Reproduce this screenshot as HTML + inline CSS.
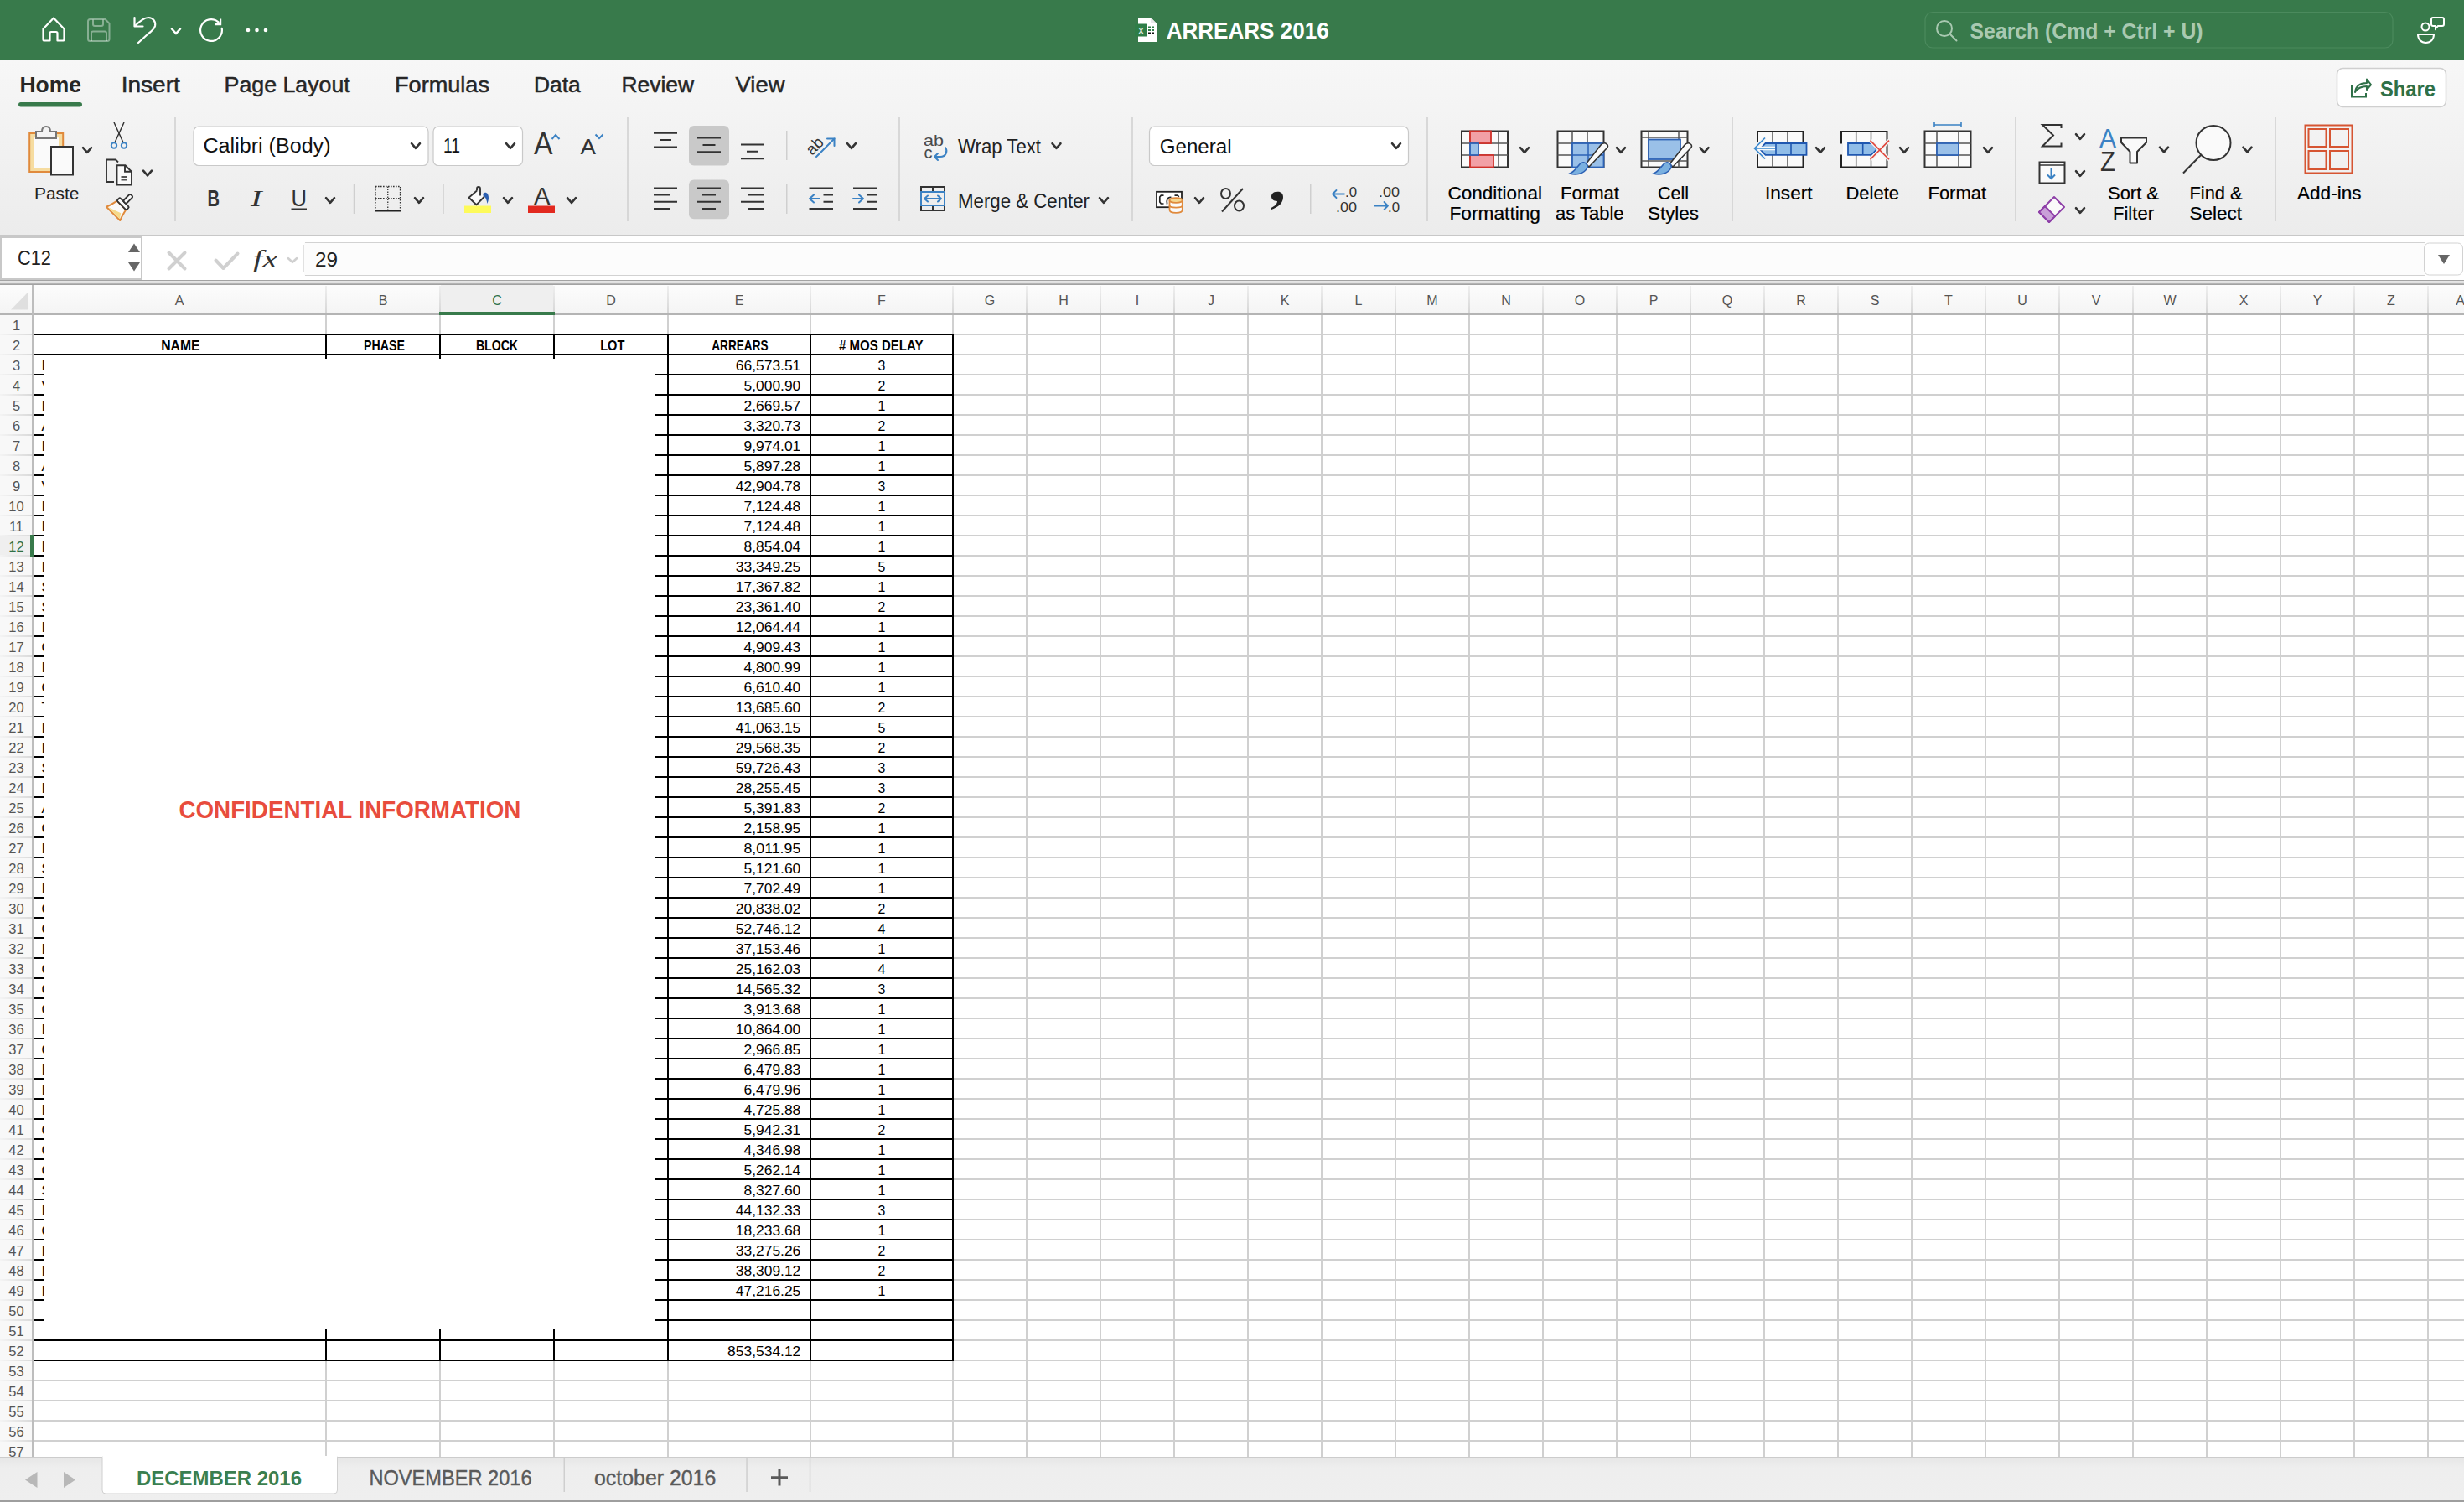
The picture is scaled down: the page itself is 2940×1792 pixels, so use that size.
<!DOCTYPE html>
<html><head><meta charset="utf-8"><title>ARREARS 2016</title>
<style>
html,body{margin:0;padding:0;width:2940px;height:1792px;overflow:hidden;background:#fff;}
svg{display:block;font-family:"Liberation Sans", sans-serif;}
</style></head><body>
<svg width="2940" height="1792" viewBox="0 0 2940 1792">
<rect x="0" y="0" width="2940" height="72" fill="#387a4b"/>
<path d="M51.5 34.5 L64 21.5 L76.5 34.5 L76.5 47 Q76.5 48.5 75 48.5 L68.5 48.5 L68.5 39.5 Q68.5 38 67 38 L61 38 Q59.5 38 59.5 39.5 L59.5 48.5 L53 48.5 Q51.5 48.5 51.5 47 Z" fill="none" stroke="#fff" stroke-width="2.2" stroke-linejoin="round"/>
<g fill="none" stroke="#fff" stroke-opacity="0.4" stroke-width="2"><path d="M107.5 23 L125.5 23 L130.5 28 L130.5 46.5 Q130.5 49 128 49 L107.5 49 Q105 49 105 46.5 L105 25.5 Q105 23 107.5 23 Z" stroke-linejoin="round"/><path d="M111 23.5 V29 Q111 31 113 31 H121 Q123 31 123 29 V23.5"/><path d="M109 49 V39.5 Q109 37.5 111 37.5 H125 Q127 37.5 127 39.5 V49"/></g>
<g fill="none" stroke="#fff" stroke-width="2.2" stroke-linecap="round" stroke-linejoin="round"><path d="M160.5 21 L160.5 31.5 L170.5 31.5"/><path d="M161 31 C168 24 173 21 177 21 C183 21 186 26 185 31 C184 35 180 38 176 41 L165 51"/></g>
<path d="M205 34.5 L210 40 L215 34.5" fill="none" stroke="#fff" stroke-width="2.6" stroke-linecap="round" stroke-linejoin="round"/>
<g fill="none" stroke="#fff" stroke-width="2.2" stroke-linecap="round" stroke-linejoin="round"><path d="M264.7 33.8 A12.9 12.9 0 1 1 260.6 26.4"/><path d="M263.1 22.5 V29.2 H256.5" stroke-linecap="butt" stroke-linejoin="miter"/></g>
<circle cx="296" cy="36" r="2.3" fill="#fff"/>
<circle cx="306.5" cy="36" r="2.3" fill="#fff"/>
<circle cx="317" cy="36" r="2.3" fill="#fff"/>
<path d="M1358 21 L1373 21 L1380 28 L1380 50 L1358 50 Z" fill="#fff"/><path d="M1373 21 L1373 28 L1380 28" fill="#e8e8e8"/>
<rect x="1354" y="28.5" width="15" height="15" rx="1.5" fill="#2e7d47"/>
<text x="1361.5" y="40.5" font-size="11" fill="#fff" font-weight="normal" text-anchor="middle" >X</text>
<g fill="#2e7d47"><rect x="1370" y="31.5" width="3" height="2"/><rect x="1374" y="31.5" width="3" height="2"/><rect x="1370" y="35" width="3" height="2"/><rect x="1374" y="35" width="3" height="2"/><rect x="1370" y="38.5" width="3" height="2" fill="#111"/><rect x="1374" y="38.5" width="3" height="2" fill="#111"/></g>
<text x="1391.7" y="46.2" font-size="26.96" fill="#fff" font-weight="bold" text-anchor="start" textLength="194" lengthAdjust="spacingAndGlyphs" >ARREARS 2016</text>
<rect x="2297" y="14.5" width="558" height="42.5" rx="9" fill="#387a4b" stroke="#4b8a5d" stroke-width="1.2"/>
<g fill="none" stroke="#a9c9b1" stroke-width="2"><circle cx="2320" cy="34" r="9"/><path d="M2327 41 L2334.5 48.5" stroke-linecap="round"/></g>
<text x="2350.6" y="46" font-size="25.98" fill="#a9c9b1" font-weight="bold" text-anchor="start" textLength="278" lengthAdjust="spacingAndGlyphs" >Search (Cmd + Ctrl + U)</text>
<g fill="none" stroke="#fff" stroke-width="2"><circle cx="2894" cy="32" r="4.5"/><path d="M2885 41 L2904 41 C2904 47 2900 51 2894.5 51 C2889 51 2885 47 2885 41 Z"/><path d="M2903 21 L2914 21 C2915.5 21 2916 21.5 2916 23 L2916 29 C2916 30.5 2915.5 31 2914 31 L2909 31 L2906 34 L2906 31 L2903 31 C2901.5 31 2901 30.5 2901 29 L2901 23 C2901 21.5 2901.5 21 2903 21 Z"/></g>
<defs><linearGradient id="rg" x1="0" y1="0" x2="0" y2="1"><stop offset="0" stop-color="#f7f7f7"/><stop offset="1" stop-color="#ececec"/></linearGradient></defs>
<rect x="0" y="72" width="2940" height="208" fill="url(#rg)"/>
<text x="23.5" y="110" font-size="26.54" fill="#262626" font-weight="bold" text-anchor="start" textLength="73.5" lengthAdjust="spacingAndGlyphs" >Home</text>
<rect x="22" y="122" width="76" height="5.5" rx="2.75" fill="#387a4b"/>
<text x="144.7" y="110" font-size="26.54" fill="#262626" font-weight="normal" text-anchor="start" textLength="70.1" lengthAdjust="spacingAndGlyphs" stroke="#262626" stroke-width="0.5">Insert</text>
<text x="267.6" y="110" font-size="26.54" fill="#262626" font-weight="normal" text-anchor="start" textLength="150.1" lengthAdjust="spacingAndGlyphs" stroke="#262626" stroke-width="0.5">Page Layout</text>
<text x="471" y="110" font-size="26.54" fill="#262626" font-weight="normal" text-anchor="start" textLength="113" lengthAdjust="spacingAndGlyphs" stroke="#262626" stroke-width="0.5">Formulas</text>
<text x="637" y="110" font-size="26.54" fill="#262626" font-weight="normal" text-anchor="start" textLength="55.7" lengthAdjust="spacingAndGlyphs" stroke="#262626" stroke-width="0.5">Data</text>
<text x="741.5" y="110" font-size="26.54" fill="#262626" font-weight="normal" text-anchor="start" textLength="86.5" lengthAdjust="spacingAndGlyphs" stroke="#262626" stroke-width="0.5">Review</text>
<text x="877.6" y="110" font-size="26.54" fill="#262626" font-weight="normal" text-anchor="start" textLength="58.8" lengthAdjust="spacingAndGlyphs" stroke="#262626" stroke-width="0.5">View</text>
<rect x="2788.5" y="81.5" width="130" height="46" rx="7" fill="#fff" stroke="#cfcfcf" stroke-width="1.5"/>
<g fill="none" stroke="#2f7048" stroke-width="2"><path d="M2806 101 L2806 115.5 L2823 115.5 L2823 111"/><path d="M2810 110 C2811 102 2816 99 2824 99 L2824 94.5 L2829 101 L2824 107 L2824 103 C2818 103 2813 105 2810 110 Z" stroke-linejoin="round"/></g>
<text x="2840" y="114.5" font-size="25.14" fill="#2f7048" font-weight="bold" text-anchor="start" textLength="66" lengthAdjust="spacingAndGlyphs" >Share</text>
<rect x="208.25" y="140" width="1.5" height="124" fill="#cfcfcf"/>
<rect x="748.25" y="140" width="1.5" height="124" fill="#cfcfcf"/>
<rect x="1072.25" y="140" width="1.5" height="124" fill="#cfcfcf"/>
<rect x="1350.25" y="140" width="1.5" height="124" fill="#cfcfcf"/>
<rect x="1702.25" y="140" width="1.5" height="124" fill="#cfcfcf"/>
<rect x="2066.25" y="140" width="1.5" height="124" fill="#cfcfcf"/>
<rect x="2404.25" y="140" width="1.5" height="124" fill="#cfcfcf"/>
<rect x="2714.25" y="140" width="1.5" height="124" fill="#cfcfcf"/>
<rect x="421.75" y="220" width="1.5" height="35" fill="#cfcfcf"/>
<rect x="528.25" y="220" width="1.5" height="35" fill="#cfcfcf"/>
<rect x="938.0" y="220" width="1.5" height="35" fill="#cfcfcf"/>
<rect x="1563.0" y="220" width="1.5" height="35" fill="#cfcfcf"/>
<rect x="938.0" y="156" width="1.5" height="35" fill="#cfcfcf"/>
<text x="41" y="238" font-size="20.25" fill="#222" font-weight="normal" text-anchor="start" textLength="53.5" lengthAdjust="spacingAndGlyphs" >Paste</text>
<rect x="35.2" y="159" width="40" height="46" fill="#f6dca0" stroke="#e08a3c" stroke-width="2"/>
<rect x="40" y="164.2" width="30" height="35.8" fill="#fafafa"/>
<path d="M43 157 L50 157 C50 153 52 151 55 151 C58 151 60 153 60 157 L67 157 L67 165 L43 165 Z" fill="#f4f4f4" stroke="#777" stroke-width="2"/>
<rect x="61" y="175" width="26" height="33.5" fill="#fafafa" stroke="#333" stroke-width="2"/>
<path d="M99 176.2 L104.0 181.8 L109 176.2" fill="none" stroke="#333" stroke-width="2.6" stroke-linecap="round" stroke-linejoin="round"/>
<g fill="none" stroke="#333" stroke-width="1.5"><path d="M136 146 L147 170"/><path d="M148 146 L137 170"/></g><g fill="none" stroke="#3b82c4" stroke-width="2"><circle cx="136" cy="173.5" r="3.2"/><circle cx="148" cy="173.5" r="3.2"/></g>
<g fill="#fafafa" stroke="#333" stroke-width="1.9"><path d="M141 193.5 L138 190.5 L127 190.5 L127 217 L136 217" fill="none"/><path d="M139.5 197.3 L149.5 197.3 L157 204.8 L157 220.5 L139.5 220.5 Z" stroke="#eeeeee" stroke-width="5"/><path d="M139.5 197.3 L149.5 197.3 L157 204.8 L157 220.5 L139.5 220.5 Z"/><path d="M149 197.3 V204.8 H157" fill="none"/></g><path d="M144.5 211 H151.5 M144.5 214.6 H151.5" stroke="#555" stroke-width="1.8"/>
<path d="M171 203.7 L176.0 209.3 L181 203.7" fill="none" stroke="#333" stroke-width="2.6" stroke-linecap="round" stroke-linejoin="round"/>
<g transform="translate(145 245) rotate(45)"><path d="M-7.5 0 Q-9 8 -11.5 14 L11.5 14 Q9 8 7.5 0 Z" fill="#fafafa" stroke="#e08a3c" stroke-width="2" stroke-linejoin="round"/><path d="M-10 13 L10 13 L6 7 Z" fill="#f5d98a"/><rect x="-8" y="-5" width="16" height="5" rx="1.5" fill="#fafafa" stroke="#333" stroke-width="1.9"/><rect x="-2.5" y="-17" width="5" height="12" rx="2" fill="#fafafa" stroke="#333" stroke-width="1.9"/></g>
<rect x="231" y="151" width="280" height="46.5" rx="6" fill="#fff" stroke="#c9c9c9" stroke-width="1.2"/>
<text x="242.5" y="182" font-size="23.74" fill="#111" font-weight="normal" text-anchor="start" textLength="152" lengthAdjust="spacingAndGlyphs" >Calibri (Body)</text>
<path d="M491 171.2 L496.0 176.8 L501 171.2" fill="none" stroke="#333" stroke-width="2.6" stroke-linecap="round" stroke-linejoin="round"/>
<rect x="517" y="151" width="106.5" height="46.5" rx="6" fill="#fff" stroke="#c9c9c9" stroke-width="1.2"/>
<text x="529" y="182" font-size="23.74" fill="#111" font-weight="normal" text-anchor="start" textLength="20" lengthAdjust="spacingAndGlyphs" >11</text>
<path d="M604 171.2 L609.0 176.8 L614 171.2" fill="none" stroke="#333" stroke-width="2.6" stroke-linecap="round" stroke-linejoin="round"/>
<text x="637" y="184" font-size="36.31" fill="#333" font-weight="normal" text-anchor="start" textLength="22.5" lengthAdjust="spacingAndGlyphs" >A</text>
<path d="M658.5 166 L663 161 L667.5 166" fill="none" stroke="#3b82c4" stroke-width="2"/>
<text x="692.5" y="184" font-size="26.54" fill="#333" font-weight="normal" text-anchor="start" textLength="18.5" lengthAdjust="spacingAndGlyphs" >A</text>
<path d="M710.5 160.5 L715 165 L719.5 160.5" fill="none" stroke="#3b82c4" stroke-width="2"/>
<text x="247.5" y="246" font-size="27.93" fill="#333" font-weight="bold" text-anchor="start" textLength="14.5" lengthAdjust="spacingAndGlyphs" >B</text>
<text x="299" y="246" font-size="27.93" fill="#333" font-weight="normal" text-anchor="start" textLength="13.5" lengthAdjust="spacingAndGlyphs" font-style="italic" font-family="Liberation Serif">I</text>
<text x="347.5" y="246" font-size="27.93" fill="#333" font-weight="normal" text-anchor="start" textLength="18.5" lengthAdjust="spacingAndGlyphs" >U</text>
<rect x="347.5" y="248.5" width="18.5" height="1.8" fill="#333"/>
<path d="M389 236.2 L394.0 241.8 L399 236.2" fill="none" stroke="#333" stroke-width="2.6" stroke-linecap="round" stroke-linejoin="round"/>
<g fill="none" stroke="#333" stroke-width="1.3" stroke-dasharray="1.6 1.4"><rect x="448" y="222.5" width="29.5" height="28.5"/><path d="M462.75 222.5 V251 M448 236.75 H477.5"/></g><rect x="447.5" y="250" width="30.5" height="2.5" fill="#222"/>
<path d="M495 236.2 L500.0 241.8 L505 236.2" fill="none" stroke="#333" stroke-width="2.6" stroke-linecap="round" stroke-linejoin="round"/>
<path d="M569 227.5 L559.5 235.7 L568.4 244.3 L578 234.5 Z" fill="#fafafa"/><path d="M569 227.5 L559.5 235.7 L568.4 244.3 L578 234.5" fill="none" stroke="#333" stroke-width="1.9"/><path d="M573 233.5 V225 A2 2 0 0 0 569 225 V227.5" fill="none" stroke="#333" stroke-width="1.9"/><path d="M576.5 231 C579 228.5 583 230 583 236 C583 239 582 241 581.5 243 C580.5 238 579.5 235 576.5 233.5 Z" fill="#2a5eb0"/>
<rect x="554" y="245.5" width="32" height="8.5" fill="#fdfa5a"/>
<path d="M601 236.2 L606.0 241.8 L611 236.2" fill="none" stroke="#333" stroke-width="2.6" stroke-linecap="round" stroke-linejoin="round"/>
<text x="637" y="244" font-size="30.03" fill="#333" font-weight="normal" text-anchor="start" textLength="19.5" lengthAdjust="spacingAndGlyphs" >A</text>
<rect x="630" y="245.5" width="32" height="8.5" fill="#e2291f"/>
<path d="M677 236.2 L682.0 241.8 L687 236.2" fill="none" stroke="#333" stroke-width="2.6" stroke-linecap="round" stroke-linejoin="round"/>
<rect x="822" y="150" width="48" height="47.5" rx="6" fill="#c9c9c9"/>
<rect x="822" y="214.5" width="48" height="46.75" rx="6" fill="#c9c9c9"/>
<rect x="780.0" y="157.75" width="28" height="2" fill="#333"/><rect x="787.0" y="166" width="14" height="2" fill="#333"/><rect x="780.0" y="174.5" width="28" height="2" fill="#333"/>
<rect x="832.0" y="163.5" width="28" height="2" fill="#333"/><rect x="838.5" y="172" width="15" height="2" fill="#333"/><rect x="832.0" y="180.25" width="28" height="2" fill="#333"/>
<rect x="884.0" y="171.5" width="28" height="2" fill="#333"/><rect x="891.0" y="179.75" width="14" height="2" fill="#333"/><rect x="884.0" y="188.25" width="28" height="2" fill="#333"/>
<rect x="780" y="223.5" width="28" height="2" fill="#333"/><rect x="780" y="231.5" width="19.5" height="2" fill="#333"/><rect x="780" y="239.75" width="28" height="2" fill="#333"/><rect x="780" y="248" width="19.5" height="2" fill="#333"/>
<rect x="832.0" y="223.5" width="28" height="2" fill="#333"/><rect x="838.0" y="231.5" width="16" height="2" fill="#333"/><rect x="832.0" y="239.75" width="28" height="2" fill="#333"/><rect x="838.0" y="248" width="16" height="2" fill="#333"/>
<rect x="884" y="223.5" width="28" height="2" fill="#333"/><rect x="892" y="231.5" width="20" height="2" fill="#333"/><rect x="884" y="239.75" width="28" height="2" fill="#333"/><rect x="892" y="248" width="20" height="2" fill="#333"/>
<text x="0" y="0" font-size="19" fill="#333" transform="translate(969 186) rotate(-45)">ab</text>
<g fill="none" stroke="#3b82c4" stroke-width="2" stroke-linecap="round"><path d="M974 187 L995.5 165.5"/><path d="M987 165.5 L995.5 165.5 L995.5 174"/></g>
<path d="M1011 171.2 L1016.0 176.8 L1021 171.2" fill="none" stroke="#333" stroke-width="2.6" stroke-linecap="round" stroke-linejoin="round"/>
<rect x="965.5" y="223.5" width="28.5" height="2" fill="#333"/><rect x="982.5" y="231.5" width="11.5" height="2" fill="#333"/><rect x="982.5" y="239.75" width="11.5" height="2" fill="#333"/><rect x="965.5" y="248" width="28.5" height="2" fill="#333"/>
<g fill="none" stroke="#3b82c4" stroke-width="2" stroke-linecap="round" stroke-linejoin="round"><path d="M966 237 L978 237 M971 232.5 L966 237 L971 241.5"/><path d="M1018 237 L1030 237 M1025 232.5 L1030 237 L1025 241.5"/></g>
<rect x="1018.0" y="223.5" width="28.5" height="2" fill="#333"/><rect x="1035.0" y="231.5" width="11.5" height="2" fill="#333"/><rect x="1035.0" y="239.75" width="11.5" height="2" fill="#333"/><rect x="1018.0" y="248" width="28.5" height="2" fill="#333"/>
<text x="1102" y="174" font-size="19" fill="#4a4a4a" font-weight="normal" text-anchor="start" textLength="24" lengthAdjust="spacingAndGlyphs" >ab</text>
<text x="1102.5" y="188.5" font-size="21" fill="#4a4a4a" font-weight="normal" text-anchor="start" textLength="10" lengthAdjust="spacingAndGlyphs" >c</text>
<g fill="none" stroke="#3b82c4" stroke-width="2" stroke-linecap="round" stroke-linejoin="round"><path d="M1128 176 C1131 180 1129 187 1122 187 L1115 187"/><path d="M1119 183 L1115 187 L1119 191"/></g>
<text x="1143" y="182.5" font-size="23.04" fill="#222" font-weight="normal" text-anchor="start" textLength="99" lengthAdjust="spacingAndGlyphs" >Wrap Text</text>
<path d="M1255.5 171.2 L1260.5 176.8 L1265.5 171.2" fill="none" stroke="#333" stroke-width="2.6" stroke-linecap="round" stroke-linejoin="round"/>
<g fill="none" stroke="#333" stroke-width="2"><rect x="1099" y="223" width="28" height="28"/><path d="M1113 223 V229 M1113 245 V251"/></g><rect x="1099" y="229" width="28" height="16" fill="none" stroke="#3b82c4" stroke-width="2"/><path d="M1103 237 L1123 237 M1107 233.5 L1103 237 L1107 240.5 M1119 233.5 L1123 237 L1119 240.5" fill="none" stroke="#3b82c4" stroke-width="2" stroke-linecap="round" stroke-linejoin="round"/>
<text x="1143" y="247.5" font-size="23.04" fill="#222" font-weight="normal" text-anchor="start" textLength="157" lengthAdjust="spacingAndGlyphs" >Merge &amp; Center</text>
<path d="M1312 236.2 L1317.0 241.8 L1322 236.2" fill="none" stroke="#333" stroke-width="2.6" stroke-linecap="round" stroke-linejoin="round"/>
<rect x="1371.5" y="151" width="309" height="46.5" rx="6" fill="#fff" stroke="#c9c9c9" stroke-width="1.2"/>
<text x="1383.75" y="182.5" font-size="24.44" fill="#111" font-weight="normal" text-anchor="start" textLength="85.75" lengthAdjust="spacingAndGlyphs" >General</text>
<path d="M1661 171.2 L1666.0 176.8 L1671 171.2" fill="none" stroke="#333" stroke-width="2.6" stroke-linecap="round" stroke-linejoin="round"/>
<rect x="1380" y="228.8" width="30" height="18.4" fill="#fff" stroke="#222" stroke-width="1.8"/><path d="M1388.5 233.2 H1385.3 L1383.8 235 V241 L1385.3 243 H1388.5 M1397.5 235.5 C1393 234.5 1391.5 239 1392.6 243.5 M1401.5 233.2 H1405 L1406.8 234.8" fill="none" stroke="#222" stroke-width="1.7"/>
<path d="M1395.5 239 V250.5 C1395.5 255 1410.8 255 1410.8 250.5 V239 Z" fill="#fafafa" stroke="#e08a3c" stroke-width="1.8"/><path d="M1395.5 245 C1395.5 248.5 1410.8 248.5 1410.8 245" fill="none" stroke="#e08a3c" stroke-width="1.8"/><ellipse cx="1403.15" cy="239" rx="7.65" ry="2.9" fill="#f5d890" stroke="#e08a3c" stroke-width="1.8"/>
<path d="M1426 236.2 L1431.0 241.8 L1436 236.2" fill="none" stroke="#333" stroke-width="2.6" stroke-linecap="round" stroke-linejoin="round"/>
<g fill="none" stroke="#333" stroke-width="2"><ellipse cx="1462.5" cy="231" rx="5.5" ry="6"/><ellipse cx="1478.5" cy="245.5" rx="5.5" ry="6"/><path d="M1483 225 L1458 252.5"/></g>
<path d="M1523 229 C1527 228 1531 230 1531 235 C1531 242 1526 247 1517 250 L1516.5 248 C1521 246 1524 243 1524 240 C1519 240 1517 237 1517 234.5 C1517 231 1519.5 229 1523 229 Z" fill="#222"/>
<text x="1605" y="235" font-size="17" fill="#333" font-weight="normal" text-anchor="start" textLength="14" lengthAdjust="spacingAndGlyphs" >.0</text>
<text x="1594" y="252.5" font-size="17" fill="#333" font-weight="normal" text-anchor="start" textLength="25" lengthAdjust="spacingAndGlyphs" >.00</text>
<path d="M1590 231.5 L1604 231.5 M1594.5 227 L1590 231.5 L1594.5 236" fill="none" stroke="#3b82c4" stroke-width="1.8" stroke-linecap="round" stroke-linejoin="round"/>
<text x="1645" y="235" font-size="17" fill="#333" font-weight="normal" text-anchor="start" textLength="25" lengthAdjust="spacingAndGlyphs" >.00</text>
<text x="1656" y="252.5" font-size="17" fill="#333" font-weight="normal" text-anchor="start" textLength="14" lengthAdjust="spacingAndGlyphs" >.0</text>
<path d="M1640.5 245.5 L1656 245.5 M1651.5 241 L1656 245.5 L1651.5 250" fill="none" stroke="#3b82c4" stroke-width="1.8" stroke-linecap="round" stroke-linejoin="round"/>
<text x="1727.5" y="238" font-size="21.65" fill="#000" font-weight="normal" text-anchor="start" textLength="112.5" lengthAdjust="spacingAndGlyphs" stroke="#000" stroke-width="0.2">Conditional</text>
<text x="1729.5" y="262" font-size="21.65" fill="#000" font-weight="normal" text-anchor="start" textLength="108.5" lengthAdjust="spacingAndGlyphs" stroke="#000" stroke-width="0.2">Formatting</text>
<text x="1862" y="238" font-size="21.65" fill="#000" font-weight="normal" text-anchor="start" textLength="70" lengthAdjust="spacingAndGlyphs" stroke="#000" stroke-width="0.2">Format</text>
<text x="1856" y="262" font-size="21.65" fill="#000" font-weight="normal" text-anchor="start" textLength="81.5" lengthAdjust="spacingAndGlyphs" stroke="#000" stroke-width="0.2">as Table</text>
<text x="1978" y="238" font-size="21.65" fill="#000" font-weight="normal" text-anchor="start" textLength="37" lengthAdjust="spacingAndGlyphs" stroke="#000" stroke-width="0.2">Cell</text>
<text x="1966" y="262" font-size="21.65" fill="#000" font-weight="normal" text-anchor="start" textLength="61" lengthAdjust="spacingAndGlyphs" stroke="#000" stroke-width="0.2">Styles</text>
<text x="2106" y="238" font-size="21.65" fill="#000" font-weight="normal" text-anchor="start" textLength="56.5" lengthAdjust="spacingAndGlyphs" stroke="#000" stroke-width="0.2">Insert</text>
<text x="2202.5" y="238" font-size="21.65" fill="#000" font-weight="normal" text-anchor="start" textLength="63.5" lengthAdjust="spacingAndGlyphs" stroke="#000" stroke-width="0.2">Delete</text>
<text x="2300.5" y="238" font-size="21.65" fill="#000" font-weight="normal" text-anchor="start" textLength="69.5" lengthAdjust="spacingAndGlyphs" stroke="#000" stroke-width="0.2">Format</text>
<text x="2515" y="238" font-size="21.65" fill="#000" font-weight="normal" text-anchor="start" textLength="61" lengthAdjust="spacingAndGlyphs" stroke="#000" stroke-width="0.2">Sort &amp;</text>
<text x="2521" y="262" font-size="21.65" fill="#000" font-weight="normal" text-anchor="start" textLength="49" lengthAdjust="spacingAndGlyphs" stroke="#000" stroke-width="0.2">Filter</text>
<text x="2612.5" y="238" font-size="21.65" fill="#000" font-weight="normal" text-anchor="start" textLength="63.0" lengthAdjust="spacingAndGlyphs" stroke="#000" stroke-width="0.2">Find &amp;</text>
<text x="2612.5" y="262" font-size="21.65" fill="#000" font-weight="normal" text-anchor="start" textLength="62.5" lengthAdjust="spacingAndGlyphs" stroke="#000" stroke-width="0.2">Select</text>
<text x="2741" y="238" font-size="21.65" fill="#000" font-weight="normal" text-anchor="start" textLength="76.5" lengthAdjust="spacingAndGlyphs" stroke="#000" stroke-width="0.2">Add-ins</text>
<path d="M1814 176.2 L1819.0 181.8 L1824 176.2" fill="none" stroke="#333" stroke-width="2.6" stroke-linecap="round" stroke-linejoin="round"/>
<path d="M1929 176.2 L1934.0 181.8 L1939 176.2" fill="none" stroke="#333" stroke-width="2.6" stroke-linecap="round" stroke-linejoin="round"/>
<path d="M2028.5 176.2 L2033.5 181.8 L2038.5 176.2" fill="none" stroke="#333" stroke-width="2.6" stroke-linecap="round" stroke-linejoin="round"/>
<path d="M2167 176.2 L2172.0 181.8 L2177 176.2" fill="none" stroke="#333" stroke-width="2.6" stroke-linecap="round" stroke-linejoin="round"/>
<path d="M2267 176.2 L2272.0 181.8 L2277 176.2" fill="none" stroke="#333" stroke-width="2.6" stroke-linecap="round" stroke-linejoin="round"/>
<path d="M2367 176.2 L2372.0 181.8 L2377 176.2" fill="none" stroke="#333" stroke-width="2.6" stroke-linecap="round" stroke-linejoin="round"/>
<path d="M2477 160.2 L2482.0 165.8 L2487 160.2" fill="none" stroke="#333" stroke-width="2.6" stroke-linecap="round" stroke-linejoin="round"/>
<path d="M2477 204.2 L2482.0 209.8 L2487 204.2" fill="none" stroke="#333" stroke-width="2.6" stroke-linecap="round" stroke-linejoin="round"/>
<path d="M2477 248.2 L2482.0 253.8 L2487 248.2" fill="none" stroke="#333" stroke-width="2.6" stroke-linecap="round" stroke-linejoin="round"/>
<path d="M2577 175.7 L2582.0 181.3 L2587 175.7" fill="none" stroke="#333" stroke-width="2.6" stroke-linecap="round" stroke-linejoin="round"/>
<path d="M2676.5 175.7 L2681.5 181.3 L2686.5 175.7" fill="none" stroke="#333" stroke-width="2.6" stroke-linecap="round" stroke-linejoin="round"/>
<rect x="1744" y="156.5" width="55" height="43" fill="#fafafa" stroke="#333" stroke-width="2"/><path d="M1754 156.5 V199.5" stroke="#555" stroke-width="1.5"/><path d="M1788 156.5 V199.5" stroke="#555" stroke-width="1.5"/><path d="M1744 171 H1799" stroke="#555" stroke-width="1.5"/><path d="M1744 185 H1799" stroke="#555" stroke-width="1.5"/>
<rect x="1754" y="156.5" width="25" height="14.5" fill="#f2a0a6" stroke="#d0302a" stroke-width="1.8"/><rect x="1754" y="185" width="28" height="14.5" fill="#f2a0a6" stroke="#d0302a" stroke-width="1.8"/><rect x="1754" y="171" width="10" height="14" fill="#9ac0e8" stroke="#2d62b5" stroke-width="1.8"/>
<rect x="1858.5" y="156.5" width="55" height="43" fill="#fafafa" stroke="#333" stroke-width="2"/><path d="M1876 156.5 V199.5" stroke="#555" stroke-width="1.5"/><path d="M1894 156.5 V199.5" stroke="#555" stroke-width="1.5"/><path d="M1858.5 171 H1913.5" stroke="#555" stroke-width="1.5"/><path d="M1858.5 185 H1913.5" stroke="#555" stroke-width="1.5"/>
<rect x="1876" y="171" width="37.5" height="28.5" fill="#9ac0e8" stroke="#2d62b5" stroke-width="1.8"/><path d="M1895 171 V199.5 M1876 185 H1913.5" stroke="#2d62b5" stroke-width="1.5"/>
<path d="M1917 172 C1915 170 1912 171 1910 173 L1892 196 L1896 199 L1917 177 C1919 175 1919 173 1917 172 Z" fill="#fafafa" stroke="#333" stroke-width="1.6"/><path d="M1873 207 C1880 209 1890 208 1894 200 C1895 196 1891 193 1888 194 C1883 195 1882 203 1873 207 Z" fill="#7ab0e0" stroke="#2d62b5" stroke-width="1.6"/>
<rect x="1958.5" y="156.5" width="55" height="43" fill="#fafafa" stroke="#333" stroke-width="2"/><path d="M1967 156.5 V199.5" stroke="#555" stroke-width="1.5"/><path d="M2003 156.5 V199.5" stroke="#555" stroke-width="1.5"/><path d="M1958.5 164 H2013.5" stroke="#555" stroke-width="1.5"/><path d="M1958.5 192 H2013.5" stroke="#555" stroke-width="1.5"/>
<rect x="1967" y="166.5" width="38" height="23.5" fill="#9ac0e8" stroke="#2d62b5" stroke-width="1.8"/>
<path d="M2017 172 C2015 170 2012 171 2010 173 L1992 196 L1996 199 L2017 177 C2019 175 2019 173 2017 172 Z" fill="#fafafa" stroke="#333" stroke-width="1.6"/><path d="M1973 207 C1980 209 1990 208 1994 200 C1995 196 1991 193 1988 194 C1983 195 1982 203 1973 207 Z" fill="#7ab0e0" stroke="#2d62b5" stroke-width="1.6"/>
<rect x="2097" y="157" width="54.5" height="42.5" fill="#fafafa" stroke="#222" stroke-width="2"/><path d="M2115 157 V199.5 M2133 157 V199.5" stroke="#555" stroke-width="1.5"/>
<path d="M2106.5 171 H2155.5 V184.8 H2106.5 L2100 177.9 Z" fill="#90bde8" stroke="#1f57b0" stroke-width="1.8"/><path d="M2119 171 V184.8 M2137 171 V184.8" stroke="#1f57b0" stroke-width="1.6"/>
<path d="M2094 177 H2118" stroke="#fafafa" stroke-width="4.5"/><path d="M2106 164.5 L2093.5 177 L2106 189.5" fill="none" stroke="#f4f4f4" stroke-width="4.5"/><path d="M2094 177 H2118 M2106 164.5 L2093.5 177 L2106 189.5" fill="none" stroke="#3b8ad0" stroke-width="1.7"/>
<rect x="2197" y="157" width="54.5" height="42.5" fill="#fafafa" stroke="#222" stroke-width="2"/><path d="M2214.7 157 V199.5 M2232.5 157 V199.5" stroke="#555" stroke-width="1.5"/><rect x="2195" y="171.5" width="4" height="13" fill="#f0f0f0"/>
<path d="M2205 171 H2233 L2239.5 177.9 L2233 184.8 H2205 Z" fill="#90bde8" stroke="#1f57b0" stroke-width="1.8"/><path d="M2222.7 171 V184.8" stroke="#1f57b0" stroke-width="1.6"/>
<path d="M2231.5 167.6 L2254 190.3 M2254 167.6 L2231.5 190.3" stroke="#f4f4f4" stroke-width="4.5"/><path d="M2231.5 167.6 L2254 190.3 M2254 167.6 L2231.5 190.3" stroke="#e0453a" stroke-width="1.6"/>
<rect x="2296.5" y="156.5" width="55" height="43" fill="#fafafa" stroke="#333" stroke-width="2"/><path d="M2311 156.5 V199.5" stroke="#555" stroke-width="1.5"/><path d="M2337 156.5 V199.5" stroke="#555" stroke-width="1.5"/><path d="M2296.5 171 H2351.5" stroke="#555" stroke-width="1.5"/><path d="M2296.5 185 H2351.5" stroke="#555" stroke-width="1.5"/>
<rect x="2311" y="171" width="26" height="14" fill="#9ac0e8" stroke="#2d62b5" stroke-width="1.8"/><path d="M2308 149 H2340 M2308 146 V152 M2340 146 V152" stroke="#3b82c4" stroke-width="1.6"/>
<path d="M2459.5 153 V149 L2437 149 L2450 161.5 L2437 174.5 L2459.5 174.5 V170.5" fill="none" stroke="#333" stroke-width="2"/>
<rect x="2433.5" y="193.5" width="30" height="25" fill="#fafafa" stroke="#333" stroke-width="2"/><path d="M2433.5 197 H2463.5" stroke="#333" stroke-width="1.5"/><path d="M2447.5 200 V213 M2443 208.5 L2447.5 213 L2452 208.5" fill="none" stroke="#3b82c4" stroke-width="2"/>
<path d="M2433 253 L2451 235 L2463 247 L2445 265 Z" fill="#fafafa" stroke="#8e3fa8" stroke-width="2" stroke-linejoin="round"/><path d="M2433 253 L2440 246 L2452 258 L2445 265 Z" fill="#c9a0d8" stroke="#8e3fa8" stroke-width="2" stroke-linejoin="round"/>
<text x="2505" y="175.5" font-size="32.12" fill="#3b82c4" font-weight="normal" text-anchor="start" textLength="20" lengthAdjust="spacingAndGlyphs" >A</text>
<text x="2506" y="204" font-size="33.52" fill="#333" font-weight="normal" text-anchor="start" textLength="18" lengthAdjust="spacingAndGlyphs" >Z</text>
<path d="M2531 164.5 L2561 164.5 L2561 170 L2550 181 L2550 194.5 L2541.5 194.5 L2541.5 181 L2531 170 Z" fill="#fafafa" stroke="#333" stroke-width="2" stroke-linejoin="round"/>
<circle cx="2641" cy="170.5" r="20.5" fill="#fafafa" stroke="#333" stroke-width="2"/><path d="M2626 185 L2605 206.5" stroke="#333" stroke-width="2"/>
<g fill="none" stroke="#d65532" stroke-width="2"><rect x="2750.5" y="149.5" width="56" height="57"/><rect x="2754.5" y="154" width="21" height="21"/><rect x="2780" y="154" width="22" height="21"/><rect x="2754.5" y="180" width="21" height="22"/><rect x="2780" y="180" width="22" height="22"/></g>
<rect x="0" y="280" width="2940" height="2" fill="#c8c8c8"/>
<rect x="0" y="282" width="2940" height="52" fill="#fff"/>
<rect x="1" y="283" width="168" height="50" fill="#fff" stroke="#c8c8c8" stroke-width="2"/>
<text x="21" y="316" font-size="23.74" fill="#222" font-weight="normal" text-anchor="start" textLength="40" lengthAdjust="spacingAndGlyphs" >C12</text>
<path d="M153 301 L160 290.5 L167 301 Z M153 313 L167 313 L160 323.5 Z" fill="#666"/>
<path d="M201.5 301.5 L220.5 320.5 M220.5 301.5 L201.5 320.5" stroke="#d0d0d0" stroke-width="4" stroke-linecap="round"/>
<path d="M257.5 310.5 L266.5 320 L283.5 302.5" fill="none" stroke="#d0d0d0" stroke-width="4" stroke-linecap="round" stroke-linejoin="round"/>
<text x="302" y="319" font-size="30" fill="#333" font-family="Liberation Serif" font-style="italic" textLength="29" lengthAdjust="spacingAndGlyphs">fx</text>
<path d="M344 308.2 L349.0 312.8 L354 308.2" fill="none" stroke="#d0d0d0" stroke-width="2.6" stroke-linecap="round" stroke-linejoin="round"/>
<rect x="363" y="289.5" width="2530" height="39" fill="#fcfcfc"/><path d="M364 289.5 H2893 M364 328.5 H2893" stroke="#d2d2d2" stroke-width="1.2"/><rect x="361" y="292" width="1.5" height="33" fill="#c4c4c4"/>
<text x="376" y="317.5" font-size="24.44" fill="#222" font-weight="normal" text-anchor="start" textLength="27" lengthAdjust="spacingAndGlyphs" >29</text>
<rect x="2892.5" y="290" width="46" height="38" rx="6" fill="#fff" stroke="#d2d2d2" stroke-width="1"/>
<path d="M2909 304 L2923 304 L2916 315 Z" fill="#666"/>
<rect x="0" y="334" width="2940" height="1.5" fill="#a3a3a3"/>
<rect x="0" y="335.5" width="2940" height="2" fill="#fafafa"/>
<defs><linearGradient id="fb" x1="0" y1="0" x2="0" y2="1"><stop offset="0" stop-color="#c4c4c4"/><stop offset="1" stop-color="#9a9a9a"/></linearGradient></defs>
<rect x="0" y="337.5" width="2940" height="2.5" fill="url(#fb)"/>
<rect x="40" y="376" width="2900" height="1362" fill="#fff"/>
<rect x="388" y="376" width="2" height="1362" fill="#d0d0d0"/>
<rect x="524" y="376" width="2" height="1362" fill="#d0d0d0"/>
<rect x="660" y="376" width="2" height="1362" fill="#d0d0d0"/>
<rect x="796" y="376" width="2" height="1362" fill="#d0d0d0"/>
<rect x="966" y="376" width="2" height="1362" fill="#d0d0d0"/>
<rect x="1136" y="376" width="2" height="1362" fill="#d0d0d0"/>
<rect x="1224" y="376" width="2" height="1362" fill="#d0d0d0"/>
<rect x="1312" y="376" width="2" height="1362" fill="#d0d0d0"/>
<rect x="1400" y="376" width="2" height="1362" fill="#d0d0d0"/>
<rect x="1488" y="376" width="2" height="1362" fill="#d0d0d0"/>
<rect x="1576" y="376" width="2" height="1362" fill="#d0d0d0"/>
<rect x="1664" y="376" width="2" height="1362" fill="#d0d0d0"/>
<rect x="1752" y="376" width="2" height="1362" fill="#d0d0d0"/>
<rect x="1840" y="376" width="2" height="1362" fill="#d0d0d0"/>
<rect x="1928" y="376" width="2" height="1362" fill="#d0d0d0"/>
<rect x="2016" y="376" width="2" height="1362" fill="#d0d0d0"/>
<rect x="2104" y="376" width="2" height="1362" fill="#d0d0d0"/>
<rect x="2192" y="376" width="2" height="1362" fill="#d0d0d0"/>
<rect x="2280" y="376" width="2" height="1362" fill="#d0d0d0"/>
<rect x="2368" y="376" width="2" height="1362" fill="#d0d0d0"/>
<rect x="2456" y="376" width="2" height="1362" fill="#d0d0d0"/>
<rect x="2544" y="376" width="2" height="1362" fill="#d0d0d0"/>
<rect x="2632" y="376" width="2" height="1362" fill="#d0d0d0"/>
<rect x="2720" y="376" width="2" height="1362" fill="#d0d0d0"/>
<rect x="2808" y="376" width="2" height="1362" fill="#d0d0d0"/>
<rect x="2896" y="376" width="2" height="1362" fill="#d0d0d0"/>
<rect x="2984" y="376" width="2" height="1362" fill="#d0d0d0"/>
<rect x="40" y="398" width="2900" height="2" fill="#d0d0d0"/>
<rect x="40" y="422" width="2900" height="2" fill="#d0d0d0"/>
<rect x="40" y="446" width="2900" height="2" fill="#d0d0d0"/>
<rect x="40" y="470" width="2900" height="2" fill="#d0d0d0"/>
<rect x="40" y="494" width="2900" height="2" fill="#d0d0d0"/>
<rect x="40" y="518" width="2900" height="2" fill="#d0d0d0"/>
<rect x="40" y="542" width="2900" height="2" fill="#d0d0d0"/>
<rect x="40" y="566" width="2900" height="2" fill="#d0d0d0"/>
<rect x="40" y="590" width="2900" height="2" fill="#d0d0d0"/>
<rect x="40" y="614" width="2900" height="2" fill="#d0d0d0"/>
<rect x="40" y="638" width="2900" height="2" fill="#d0d0d0"/>
<rect x="40" y="662" width="2900" height="2" fill="#d0d0d0"/>
<rect x="40" y="686" width="2900" height="2" fill="#d0d0d0"/>
<rect x="40" y="710" width="2900" height="2" fill="#d0d0d0"/>
<rect x="40" y="734" width="2900" height="2" fill="#d0d0d0"/>
<rect x="40" y="758" width="2900" height="2" fill="#d0d0d0"/>
<rect x="40" y="782" width="2900" height="2" fill="#d0d0d0"/>
<rect x="40" y="806" width="2900" height="2" fill="#d0d0d0"/>
<rect x="40" y="830" width="2900" height="2" fill="#d0d0d0"/>
<rect x="40" y="854" width="2900" height="2" fill="#d0d0d0"/>
<rect x="40" y="878" width="2900" height="2" fill="#d0d0d0"/>
<rect x="40" y="902" width="2900" height="2" fill="#d0d0d0"/>
<rect x="40" y="926" width="2900" height="2" fill="#d0d0d0"/>
<rect x="40" y="950" width="2900" height="2" fill="#d0d0d0"/>
<rect x="40" y="974" width="2900" height="2" fill="#d0d0d0"/>
<rect x="40" y="998" width="2900" height="2" fill="#d0d0d0"/>
<rect x="40" y="1022" width="2900" height="2" fill="#d0d0d0"/>
<rect x="40" y="1046" width="2900" height="2" fill="#d0d0d0"/>
<rect x="40" y="1070" width="2900" height="2" fill="#d0d0d0"/>
<rect x="40" y="1094" width="2900" height="2" fill="#d0d0d0"/>
<rect x="40" y="1118" width="2900" height="2" fill="#d0d0d0"/>
<rect x="40" y="1142" width="2900" height="2" fill="#d0d0d0"/>
<rect x="40" y="1166" width="2900" height="2" fill="#d0d0d0"/>
<rect x="40" y="1190" width="2900" height="2" fill="#d0d0d0"/>
<rect x="40" y="1214" width="2900" height="2" fill="#d0d0d0"/>
<rect x="40" y="1238" width="2900" height="2" fill="#d0d0d0"/>
<rect x="40" y="1262" width="2900" height="2" fill="#d0d0d0"/>
<rect x="40" y="1286" width="2900" height="2" fill="#d0d0d0"/>
<rect x="40" y="1310" width="2900" height="2" fill="#d0d0d0"/>
<rect x="40" y="1334" width="2900" height="2" fill="#d0d0d0"/>
<rect x="40" y="1358" width="2900" height="2" fill="#d0d0d0"/>
<rect x="40" y="1382" width="2900" height="2" fill="#d0d0d0"/>
<rect x="40" y="1406" width="2900" height="2" fill="#d0d0d0"/>
<rect x="40" y="1430" width="2900" height="2" fill="#d0d0d0"/>
<rect x="40" y="1454" width="2900" height="2" fill="#d0d0d0"/>
<rect x="40" y="1478" width="2900" height="2" fill="#d0d0d0"/>
<rect x="40" y="1502" width="2900" height="2" fill="#d0d0d0"/>
<rect x="40" y="1526" width="2900" height="2" fill="#d0d0d0"/>
<rect x="40" y="1550" width="2900" height="2" fill="#d0d0d0"/>
<rect x="40" y="1574" width="2900" height="2" fill="#d0d0d0"/>
<rect x="40" y="1598" width="2900" height="2" fill="#d0d0d0"/>
<rect x="40" y="1622" width="2900" height="2" fill="#d0d0d0"/>
<rect x="40" y="1646" width="2900" height="2" fill="#d0d0d0"/>
<rect x="40" y="1670" width="2900" height="2" fill="#d0d0d0"/>
<rect x="40" y="1694" width="2900" height="2" fill="#d0d0d0"/>
<rect x="40" y="1718" width="2900" height="2" fill="#d0d0d0"/>
<rect x="40" y="1742" width="2900" height="2" fill="#d0d0d0"/>
<rect x="40" y="398" width="1098" height="1226" fill="#fff"/>
<rect x="40" y="398" width="1098" height="2" fill="#000"/>
<rect x="40" y="422" width="1098" height="2" fill="#000"/>
<rect x="40" y="446" width="1098" height="2" fill="#000"/>
<rect x="40" y="470" width="1098" height="2" fill="#000"/>
<rect x="40" y="494" width="1098" height="2" fill="#000"/>
<rect x="40" y="518" width="1098" height="2" fill="#000"/>
<rect x="40" y="542" width="1098" height="2" fill="#000"/>
<rect x="40" y="566" width="1098" height="2" fill="#000"/>
<rect x="40" y="590" width="1098" height="2" fill="#000"/>
<rect x="40" y="614" width="1098" height="2" fill="#000"/>
<rect x="40" y="638" width="1098" height="2" fill="#000"/>
<rect x="40" y="662" width="1098" height="2" fill="#000"/>
<rect x="40" y="686" width="1098" height="2" fill="#000"/>
<rect x="40" y="710" width="1098" height="2" fill="#000"/>
<rect x="40" y="734" width="1098" height="2" fill="#000"/>
<rect x="40" y="758" width="1098" height="2" fill="#000"/>
<rect x="40" y="782" width="1098" height="2" fill="#000"/>
<rect x="40" y="806" width="1098" height="2" fill="#000"/>
<rect x="40" y="830" width="1098" height="2" fill="#000"/>
<rect x="40" y="854" width="1098" height="2" fill="#000"/>
<rect x="40" y="878" width="1098" height="2" fill="#000"/>
<rect x="40" y="902" width="1098" height="2" fill="#000"/>
<rect x="40" y="926" width="1098" height="2" fill="#000"/>
<rect x="40" y="950" width="1098" height="2" fill="#000"/>
<rect x="40" y="974" width="1098" height="2" fill="#000"/>
<rect x="40" y="998" width="1098" height="2" fill="#000"/>
<rect x="40" y="1022" width="1098" height="2" fill="#000"/>
<rect x="40" y="1046" width="1098" height="2" fill="#000"/>
<rect x="40" y="1070" width="1098" height="2" fill="#000"/>
<rect x="40" y="1094" width="1098" height="2" fill="#000"/>
<rect x="40" y="1118" width="1098" height="2" fill="#000"/>
<rect x="40" y="1142" width="1098" height="2" fill="#000"/>
<rect x="40" y="1166" width="1098" height="2" fill="#000"/>
<rect x="40" y="1190" width="1098" height="2" fill="#000"/>
<rect x="40" y="1214" width="1098" height="2" fill="#000"/>
<rect x="40" y="1238" width="1098" height="2" fill="#000"/>
<rect x="40" y="1262" width="1098" height="2" fill="#000"/>
<rect x="40" y="1286" width="1098" height="2" fill="#000"/>
<rect x="40" y="1310" width="1098" height="2" fill="#000"/>
<rect x="40" y="1334" width="1098" height="2" fill="#000"/>
<rect x="40" y="1358" width="1098" height="2" fill="#000"/>
<rect x="40" y="1382" width="1098" height="2" fill="#000"/>
<rect x="40" y="1406" width="1098" height="2" fill="#000"/>
<rect x="40" y="1430" width="1098" height="2" fill="#000"/>
<rect x="40" y="1454" width="1098" height="2" fill="#000"/>
<rect x="40" y="1478" width="1098" height="2" fill="#000"/>
<rect x="40" y="1502" width="1098" height="2" fill="#000"/>
<rect x="40" y="1526" width="1098" height="2" fill="#000"/>
<rect x="40" y="1550" width="1098" height="2" fill="#000"/>
<rect x="40" y="1574" width="1098" height="2" fill="#000"/>
<rect x="40" y="1598" width="1098" height="2" fill="#000"/>
<rect x="40" y="1622" width="1098" height="2" fill="#000"/>
<rect x="388" y="398" width="2" height="1226" fill="#000"/>
<rect x="524" y="398" width="2" height="1226" fill="#000"/>
<rect x="660" y="398" width="2" height="1226" fill="#000"/>
<rect x="796" y="398" width="2" height="1226" fill="#000"/>
<rect x="966" y="398" width="2" height="1226" fill="#000"/>
<rect x="1136" y="398" width="2" height="1226" fill="#000"/>
<rect x="53" y="428" width="728" height="1158" fill="#fff"/>
<text x="192.2" y="418" font-size="16.48" fill="#000" font-weight="bold" text-anchor="start" textLength="46.4" lengthAdjust="spacingAndGlyphs" >NAME</text>
<text x="434.0" y="418" font-size="16.48" fill="#000" font-weight="bold" text-anchor="start" textLength="48.9" lengthAdjust="spacingAndGlyphs" >PHASE</text>
<text x="567.9000000000001" y="418" font-size="16.48" fill="#000" font-weight="bold" text-anchor="start" textLength="50.1" lengthAdjust="spacingAndGlyphs" >BLOCK</text>
<text x="716.2" y="418" font-size="16.48" fill="#000" font-weight="bold" text-anchor="start" textLength="29.2" lengthAdjust="spacingAndGlyphs" >LOT</text>
<text x="849.2" y="418" font-size="16.48" fill="#000" font-weight="bold" text-anchor="start" textLength="67.4" lengthAdjust="spacingAndGlyphs" >ARREARS</text>
<text x="1001.0" y="418" font-size="16.48" fill="#000" font-weight="bold" text-anchor="start" textLength="100.5" lengthAdjust="spacingAndGlyphs" ># MOS DELAY</text>
<text x="955.3" y="442" font-size="15.92" fill="#000" font-weight="normal" text-anchor="end" textLength="77.5" lengthAdjust="spacingAndGlyphs" >66,573.51</text>
<text x="1052" y="442" font-size="15.92" fill="#000" font-weight="normal" text-anchor="middle" >3</text>
<text x="955.3" y="466" font-size="15.92" fill="#000" font-weight="normal" text-anchor="end" textLength="67.8" lengthAdjust="spacingAndGlyphs" >5,000.90</text>
<text x="1052" y="466" font-size="15.92" fill="#000" font-weight="normal" text-anchor="middle" >2</text>
<text x="955.3" y="490" font-size="15.92" fill="#000" font-weight="normal" text-anchor="end" textLength="67.8" lengthAdjust="spacingAndGlyphs" >2,669.57</text>
<text x="1052" y="490" font-size="15.92" fill="#000" font-weight="normal" text-anchor="middle" >1</text>
<text x="955.3" y="514" font-size="15.92" fill="#000" font-weight="normal" text-anchor="end" textLength="67.8" lengthAdjust="spacingAndGlyphs" >3,320.73</text>
<text x="1052" y="514" font-size="15.92" fill="#000" font-weight="normal" text-anchor="middle" >2</text>
<text x="955.3" y="538" font-size="15.92" fill="#000" font-weight="normal" text-anchor="end" textLength="67.8" lengthAdjust="spacingAndGlyphs" >9,974.01</text>
<text x="1052" y="538" font-size="15.92" fill="#000" font-weight="normal" text-anchor="middle" >1</text>
<text x="955.3" y="562" font-size="15.92" fill="#000" font-weight="normal" text-anchor="end" textLength="67.8" lengthAdjust="spacingAndGlyphs" >5,897.28</text>
<text x="1052" y="562" font-size="15.92" fill="#000" font-weight="normal" text-anchor="middle" >1</text>
<text x="955.3" y="586" font-size="15.92" fill="#000" font-weight="normal" text-anchor="end" textLength="77.5" lengthAdjust="spacingAndGlyphs" >42,904.78</text>
<text x="1052" y="586" font-size="15.92" fill="#000" font-weight="normal" text-anchor="middle" >3</text>
<text x="955.3" y="610" font-size="15.92" fill="#000" font-weight="normal" text-anchor="end" textLength="67.8" lengthAdjust="spacingAndGlyphs" >7,124.48</text>
<text x="1052" y="610" font-size="15.92" fill="#000" font-weight="normal" text-anchor="middle" >1</text>
<text x="955.3" y="634" font-size="15.92" fill="#000" font-weight="normal" text-anchor="end" textLength="67.8" lengthAdjust="spacingAndGlyphs" >7,124.48</text>
<text x="1052" y="634" font-size="15.92" fill="#000" font-weight="normal" text-anchor="middle" >1</text>
<text x="955.3" y="658" font-size="15.92" fill="#000" font-weight="normal" text-anchor="end" textLength="67.8" lengthAdjust="spacingAndGlyphs" >8,854.04</text>
<text x="1052" y="658" font-size="15.92" fill="#000" font-weight="normal" text-anchor="middle" >1</text>
<text x="955.3" y="682" font-size="15.92" fill="#000" font-weight="normal" text-anchor="end" textLength="77.5" lengthAdjust="spacingAndGlyphs" >33,349.25</text>
<text x="1052" y="682" font-size="15.92" fill="#000" font-weight="normal" text-anchor="middle" >5</text>
<text x="955.3" y="706" font-size="15.92" fill="#000" font-weight="normal" text-anchor="end" textLength="77.5" lengthAdjust="spacingAndGlyphs" >17,367.82</text>
<text x="1052" y="706" font-size="15.92" fill="#000" font-weight="normal" text-anchor="middle" >1</text>
<text x="955.3" y="730" font-size="15.92" fill="#000" font-weight="normal" text-anchor="end" textLength="77.5" lengthAdjust="spacingAndGlyphs" >23,361.40</text>
<text x="1052" y="730" font-size="15.92" fill="#000" font-weight="normal" text-anchor="middle" >2</text>
<text x="955.3" y="754" font-size="15.92" fill="#000" font-weight="normal" text-anchor="end" textLength="77.5" lengthAdjust="spacingAndGlyphs" >12,064.44</text>
<text x="1052" y="754" font-size="15.92" fill="#000" font-weight="normal" text-anchor="middle" >1</text>
<text x="955.3" y="778" font-size="15.92" fill="#000" font-weight="normal" text-anchor="end" textLength="67.8" lengthAdjust="spacingAndGlyphs" >4,909.43</text>
<text x="1052" y="778" font-size="15.92" fill="#000" font-weight="normal" text-anchor="middle" >1</text>
<text x="955.3" y="802" font-size="15.92" fill="#000" font-weight="normal" text-anchor="end" textLength="67.8" lengthAdjust="spacingAndGlyphs" >4,800.99</text>
<text x="1052" y="802" font-size="15.92" fill="#000" font-weight="normal" text-anchor="middle" >1</text>
<text x="955.3" y="826" font-size="15.92" fill="#000" font-weight="normal" text-anchor="end" textLength="67.8" lengthAdjust="spacingAndGlyphs" >6,610.40</text>
<text x="1052" y="826" font-size="15.92" fill="#000" font-weight="normal" text-anchor="middle" >1</text>
<text x="955.3" y="850" font-size="15.92" fill="#000" font-weight="normal" text-anchor="end" textLength="77.5" lengthAdjust="spacingAndGlyphs" >13,685.60</text>
<text x="1052" y="850" font-size="15.92" fill="#000" font-weight="normal" text-anchor="middle" >2</text>
<text x="955.3" y="874" font-size="15.92" fill="#000" font-weight="normal" text-anchor="end" textLength="77.5" lengthAdjust="spacingAndGlyphs" >41,063.15</text>
<text x="1052" y="874" font-size="15.92" fill="#000" font-weight="normal" text-anchor="middle" >5</text>
<text x="955.3" y="898" font-size="15.92" fill="#000" font-weight="normal" text-anchor="end" textLength="77.5" lengthAdjust="spacingAndGlyphs" >29,568.35</text>
<text x="1052" y="898" font-size="15.92" fill="#000" font-weight="normal" text-anchor="middle" >2</text>
<text x="955.3" y="922" font-size="15.92" fill="#000" font-weight="normal" text-anchor="end" textLength="77.5" lengthAdjust="spacingAndGlyphs" >59,726.43</text>
<text x="1052" y="922" font-size="15.92" fill="#000" font-weight="normal" text-anchor="middle" >3</text>
<text x="955.3" y="946" font-size="15.92" fill="#000" font-weight="normal" text-anchor="end" textLength="77.5" lengthAdjust="spacingAndGlyphs" >28,255.45</text>
<text x="1052" y="946" font-size="15.92" fill="#000" font-weight="normal" text-anchor="middle" >3</text>
<text x="955.3" y="970" font-size="15.92" fill="#000" font-weight="normal" text-anchor="end" textLength="67.8" lengthAdjust="spacingAndGlyphs" >5,391.83</text>
<text x="1052" y="970" font-size="15.92" fill="#000" font-weight="normal" text-anchor="middle" >2</text>
<text x="955.3" y="994" font-size="15.92" fill="#000" font-weight="normal" text-anchor="end" textLength="67.8" lengthAdjust="spacingAndGlyphs" >2,158.95</text>
<text x="1052" y="994" font-size="15.92" fill="#000" font-weight="normal" text-anchor="middle" >1</text>
<text x="955.3" y="1018" font-size="15.92" fill="#000" font-weight="normal" text-anchor="end" textLength="67.8" lengthAdjust="spacingAndGlyphs" >8,011.95</text>
<text x="1052" y="1018" font-size="15.92" fill="#000" font-weight="normal" text-anchor="middle" >1</text>
<text x="955.3" y="1042" font-size="15.92" fill="#000" font-weight="normal" text-anchor="end" textLength="67.8" lengthAdjust="spacingAndGlyphs" >5,121.60</text>
<text x="1052" y="1042" font-size="15.92" fill="#000" font-weight="normal" text-anchor="middle" >1</text>
<text x="955.3" y="1066" font-size="15.92" fill="#000" font-weight="normal" text-anchor="end" textLength="67.8" lengthAdjust="spacingAndGlyphs" >7,702.49</text>
<text x="1052" y="1066" font-size="15.92" fill="#000" font-weight="normal" text-anchor="middle" >1</text>
<text x="955.3" y="1090" font-size="15.92" fill="#000" font-weight="normal" text-anchor="end" textLength="77.5" lengthAdjust="spacingAndGlyphs" >20,838.02</text>
<text x="1052" y="1090" font-size="15.92" fill="#000" font-weight="normal" text-anchor="middle" >2</text>
<text x="955.3" y="1114" font-size="15.92" fill="#000" font-weight="normal" text-anchor="end" textLength="77.5" lengthAdjust="spacingAndGlyphs" >52,746.12</text>
<text x="1052" y="1114" font-size="15.92" fill="#000" font-weight="normal" text-anchor="middle" >4</text>
<text x="955.3" y="1138" font-size="15.92" fill="#000" font-weight="normal" text-anchor="end" textLength="77.5" lengthAdjust="spacingAndGlyphs" >37,153.46</text>
<text x="1052" y="1138" font-size="15.92" fill="#000" font-weight="normal" text-anchor="middle" >1</text>
<text x="955.3" y="1162" font-size="15.92" fill="#000" font-weight="normal" text-anchor="end" textLength="77.5" lengthAdjust="spacingAndGlyphs" >25,162.03</text>
<text x="1052" y="1162" font-size="15.92" fill="#000" font-weight="normal" text-anchor="middle" >4</text>
<text x="955.3" y="1186" font-size="15.92" fill="#000" font-weight="normal" text-anchor="end" textLength="77.5" lengthAdjust="spacingAndGlyphs" >14,565.32</text>
<text x="1052" y="1186" font-size="15.92" fill="#000" font-weight="normal" text-anchor="middle" >3</text>
<text x="955.3" y="1210" font-size="15.92" fill="#000" font-weight="normal" text-anchor="end" textLength="67.8" lengthAdjust="spacingAndGlyphs" >3,913.68</text>
<text x="1052" y="1210" font-size="15.92" fill="#000" font-weight="normal" text-anchor="middle" >1</text>
<text x="955.3" y="1234" font-size="15.92" fill="#000" font-weight="normal" text-anchor="end" textLength="77.5" lengthAdjust="spacingAndGlyphs" >10,864.00</text>
<text x="1052" y="1234" font-size="15.92" fill="#000" font-weight="normal" text-anchor="middle" >1</text>
<text x="955.3" y="1258" font-size="15.92" fill="#000" font-weight="normal" text-anchor="end" textLength="67.8" lengthAdjust="spacingAndGlyphs" >2,966.85</text>
<text x="1052" y="1258" font-size="15.92" fill="#000" font-weight="normal" text-anchor="middle" >1</text>
<text x="955.3" y="1282" font-size="15.92" fill="#000" font-weight="normal" text-anchor="end" textLength="67.8" lengthAdjust="spacingAndGlyphs" >6,479.83</text>
<text x="1052" y="1282" font-size="15.92" fill="#000" font-weight="normal" text-anchor="middle" >1</text>
<text x="955.3" y="1306" font-size="15.92" fill="#000" font-weight="normal" text-anchor="end" textLength="67.8" lengthAdjust="spacingAndGlyphs" >6,479.96</text>
<text x="1052" y="1306" font-size="15.92" fill="#000" font-weight="normal" text-anchor="middle" >1</text>
<text x="955.3" y="1330" font-size="15.92" fill="#000" font-weight="normal" text-anchor="end" textLength="67.8" lengthAdjust="spacingAndGlyphs" >4,725.88</text>
<text x="1052" y="1330" font-size="15.92" fill="#000" font-weight="normal" text-anchor="middle" >1</text>
<text x="955.3" y="1354" font-size="15.92" fill="#000" font-weight="normal" text-anchor="end" textLength="67.8" lengthAdjust="spacingAndGlyphs" >5,942.31</text>
<text x="1052" y="1354" font-size="15.92" fill="#000" font-weight="normal" text-anchor="middle" >2</text>
<text x="955.3" y="1378" font-size="15.92" fill="#000" font-weight="normal" text-anchor="end" textLength="67.8" lengthAdjust="spacingAndGlyphs" >4,346.98</text>
<text x="1052" y="1378" font-size="15.92" fill="#000" font-weight="normal" text-anchor="middle" >1</text>
<text x="955.3" y="1402" font-size="15.92" fill="#000" font-weight="normal" text-anchor="end" textLength="67.8" lengthAdjust="spacingAndGlyphs" >5,262.14</text>
<text x="1052" y="1402" font-size="15.92" fill="#000" font-weight="normal" text-anchor="middle" >1</text>
<text x="955.3" y="1426" font-size="15.92" fill="#000" font-weight="normal" text-anchor="end" textLength="67.8" lengthAdjust="spacingAndGlyphs" >8,327.60</text>
<text x="1052" y="1426" font-size="15.92" fill="#000" font-weight="normal" text-anchor="middle" >1</text>
<text x="955.3" y="1450" font-size="15.92" fill="#000" font-weight="normal" text-anchor="end" textLength="77.5" lengthAdjust="spacingAndGlyphs" >44,132.33</text>
<text x="1052" y="1450" font-size="15.92" fill="#000" font-weight="normal" text-anchor="middle" >3</text>
<text x="955.3" y="1474" font-size="15.92" fill="#000" font-weight="normal" text-anchor="end" textLength="77.5" lengthAdjust="spacingAndGlyphs" >18,233.68</text>
<text x="1052" y="1474" font-size="15.92" fill="#000" font-weight="normal" text-anchor="middle" >1</text>
<text x="955.3" y="1498" font-size="15.92" fill="#000" font-weight="normal" text-anchor="end" textLength="77.5" lengthAdjust="spacingAndGlyphs" >33,275.26</text>
<text x="1052" y="1498" font-size="15.92" fill="#000" font-weight="normal" text-anchor="middle" >2</text>
<text x="955.3" y="1522" font-size="15.92" fill="#000" font-weight="normal" text-anchor="end" textLength="77.5" lengthAdjust="spacingAndGlyphs" >38,309.12</text>
<text x="1052" y="1522" font-size="15.92" fill="#000" font-weight="normal" text-anchor="middle" >2</text>
<text x="955.3" y="1546" font-size="15.92" fill="#000" font-weight="normal" text-anchor="end" textLength="77.5" lengthAdjust="spacingAndGlyphs" >47,216.25</text>
<text x="1052" y="1546" font-size="15.92" fill="#000" font-weight="normal" text-anchor="middle" >1</text>
<text x="955.3" y="1618" font-size="15.92" fill="#000" font-weight="normal" text-anchor="end" textLength="87.2" lengthAdjust="spacingAndGlyphs" >853,534.12</text>
<defs><clipPath id="fragclip"><rect x="40" y="376" width="13" height="1400"/></clipPath></defs><g clip-path="url(#fragclip)">
<text x="49.6" y="442" font-size="16.48" fill="#000" font-weight="normal" text-anchor="start" >I</text>
<text x="49.6" y="466" font-size="16.48" fill="#000" font-weight="normal" text-anchor="start" >V</text>
<text x="49.6" y="490" font-size="16.48" fill="#000" font-weight="normal" text-anchor="start" >I</text>
<text x="49.6" y="514" font-size="16.48" fill="#000" font-weight="normal" text-anchor="start" >A</text>
<text x="49.6" y="538" font-size="16.48" fill="#000" font-weight="normal" text-anchor="start" >I</text>
<text x="49.6" y="562" font-size="16.48" fill="#000" font-weight="normal" text-anchor="start" >A</text>
<text x="49.6" y="586" font-size="16.48" fill="#000" font-weight="normal" text-anchor="start" >V</text>
<text x="49.6" y="610" font-size="16.48" fill="#000" font-weight="normal" text-anchor="start" >I</text>
<text x="49.6" y="634" font-size="16.48" fill="#000" font-weight="normal" text-anchor="start" >I</text>
<text x="49.6" y="658" font-size="16.48" fill="#000" font-weight="normal" text-anchor="start" >I</text>
<text x="49.6" y="682" font-size="16.48" fill="#000" font-weight="normal" text-anchor="start" >I</text>
<text x="49.6" y="706" font-size="16.48" fill="#000" font-weight="normal" text-anchor="start" >S</text>
<text x="49.6" y="730" font-size="16.48" fill="#000" font-weight="normal" text-anchor="start" >S</text>
<text x="49.6" y="754" font-size="16.48" fill="#000" font-weight="normal" text-anchor="start" >I</text>
<text x="49.6" y="778" font-size="16.48" fill="#000" font-weight="normal" text-anchor="start" >C</text>
<text x="49.6" y="802" font-size="16.48" fill="#000" font-weight="normal" text-anchor="start" >I</text>
<text x="49.6" y="826" font-size="16.48" fill="#000" font-weight="normal" text-anchor="start" >C</text>
<text x="49.6" y="850" font-size="16.48" fill="#000" font-weight="normal" text-anchor="start" >T</text>
<text x="49.6" y="874" font-size="16.48" fill="#000" font-weight="normal" text-anchor="start" >I</text>
<text x="49.6" y="898" font-size="16.48" fill="#000" font-weight="normal" text-anchor="start" >I</text>
<text x="49.6" y="922" font-size="16.48" fill="#000" font-weight="normal" text-anchor="start" >S</text>
<text x="49.6" y="946" font-size="16.48" fill="#000" font-weight="normal" text-anchor="start" >I</text>
<text x="49.6" y="970" font-size="16.48" fill="#000" font-weight="normal" text-anchor="start" >A</text>
<text x="49.6" y="994" font-size="16.48" fill="#000" font-weight="normal" text-anchor="start" >C</text>
<text x="49.6" y="1018" font-size="16.48" fill="#000" font-weight="normal" text-anchor="start" >I</text>
<text x="49.6" y="1042" font-size="16.48" fill="#000" font-weight="normal" text-anchor="start" >S</text>
<text x="49.6" y="1066" font-size="16.48" fill="#000" font-weight="normal" text-anchor="start" >I</text>
<text x="49.6" y="1090" font-size="16.48" fill="#000" font-weight="normal" text-anchor="start" >C</text>
<text x="49.6" y="1114" font-size="16.48" fill="#000" font-weight="normal" text-anchor="start" >C</text>
<text x="49.6" y="1138" font-size="16.48" fill="#000" font-weight="normal" text-anchor="start" >I</text>
<text x="49.6" y="1162" font-size="16.48" fill="#000" font-weight="normal" text-anchor="start" >C</text>
<text x="49.6" y="1186" font-size="16.48" fill="#000" font-weight="normal" text-anchor="start" >C</text>
<text x="49.6" y="1210" font-size="16.48" fill="#000" font-weight="normal" text-anchor="start" >C</text>
<text x="49.6" y="1234" font-size="16.48" fill="#000" font-weight="normal" text-anchor="start" >I</text>
<text x="49.6" y="1258" font-size="16.48" fill="#000" font-weight="normal" text-anchor="start" >C</text>
<text x="49.6" y="1282" font-size="16.48" fill="#000" font-weight="normal" text-anchor="start" >I</text>
<text x="49.6" y="1306" font-size="16.48" fill="#000" font-weight="normal" text-anchor="start" >I</text>
<text x="49.6" y="1330" font-size="16.48" fill="#000" font-weight="normal" text-anchor="start" >I</text>
<text x="49.6" y="1354" font-size="16.48" fill="#000" font-weight="normal" text-anchor="start" >C</text>
<text x="49.6" y="1378" font-size="16.48" fill="#000" font-weight="normal" text-anchor="start" >C</text>
<text x="49.6" y="1402" font-size="16.48" fill="#000" font-weight="normal" text-anchor="start" >C</text>
<text x="49.6" y="1426" font-size="16.48" fill="#000" font-weight="normal" text-anchor="start" >S</text>
<text x="49.6" y="1450" font-size="16.48" fill="#000" font-weight="normal" text-anchor="start" >I</text>
<text x="49.6" y="1474" font-size="16.48" fill="#000" font-weight="normal" text-anchor="start" >C</text>
<text x="49.6" y="1498" font-size="16.48" fill="#000" font-weight="normal" text-anchor="start" >I</text>
<text x="49.6" y="1522" font-size="16.48" fill="#000" font-weight="normal" text-anchor="start" >I</text>
<text x="49.6" y="1546" font-size="16.48" fill="#000" font-weight="normal" text-anchor="start" >I</text>
</g>
<text x="213.4" y="975.5" font-size="30.03" fill="#e84c3d" font-weight="bold" text-anchor="start" textLength="408" lengthAdjust="spacingAndGlyphs" >CONFIDENTIAL INFORMATION</text>
<defs><linearGradient id="chg" x1="0" y1="0" x2="0" y2="1"><stop offset="0" stop-color="#fcfcfc"/><stop offset="1" stop-color="#f4f4f4"/></linearGradient><linearGradient id="csep" x1="0" y1="0" x2="0" y2="1"><stop offset="0" stop-color="#efefef"/><stop offset="1" stop-color="#d6d6d6"/></linearGradient><linearGradient id="rsep" x1="0" y1="0" x2="1" y2="0"><stop offset="0" stop-color="#f4f4f4"/><stop offset="1" stop-color="#dadada"/></linearGradient></defs>
<rect x="0" y="340" width="2940" height="36" fill="url(#chg)"/>
<rect x="0" y="376" width="40" height="1362" fill="#f8f8f8"/>
<rect x="526" y="340" width="134" height="34" fill="#efefef"/>
<rect x="0" y="640" width="38" height="22" fill="#efefef"/>
<rect x="0" y="374" width="2940" height="2" fill="#b4b4b4"/>
<rect x="38" y="340" width="2" height="1398" fill="#bdbdbd"/>
<path d="M13 369.5 L34 348 L34 369.5 Z" fill="#dfdfdf"/>
<rect x="388" y="341" width="2" height="33" fill="url(#csep)"/>
<text x="214.0" y="364" font-size="16.06" fill="#555" font-weight="normal" text-anchor="middle" >A</text>
<rect x="524" y="341" width="2" height="33" fill="url(#csep)"/>
<text x="457.0" y="364" font-size="16.06" fill="#555" font-weight="normal" text-anchor="middle" >B</text>
<rect x="660" y="341" width="2" height="33" fill="url(#csep)"/>
<text x="593.0" y="364" font-size="16.06" fill="#2f7048" font-weight="normal" text-anchor="middle" >C</text>
<rect x="796" y="341" width="2" height="33" fill="url(#csep)"/>
<text x="729.0" y="364" font-size="16.06" fill="#555" font-weight="normal" text-anchor="middle" >D</text>
<rect x="966" y="341" width="2" height="33" fill="url(#csep)"/>
<text x="882.0" y="364" font-size="16.06" fill="#555" font-weight="normal" text-anchor="middle" >E</text>
<rect x="1136" y="341" width="2" height="33" fill="url(#csep)"/>
<text x="1052.0" y="364" font-size="16.06" fill="#555" font-weight="normal" text-anchor="middle" >F</text>
<rect x="1224" y="341" width="2" height="33" fill="url(#csep)"/>
<text x="1181.0" y="364" font-size="16.06" fill="#555" font-weight="normal" text-anchor="middle" >G</text>
<rect x="1312" y="341" width="2" height="33" fill="url(#csep)"/>
<text x="1269.0" y="364" font-size="16.06" fill="#555" font-weight="normal" text-anchor="middle" >H</text>
<rect x="1400" y="341" width="2" height="33" fill="url(#csep)"/>
<text x="1357.0" y="364" font-size="16.06" fill="#555" font-weight="normal" text-anchor="middle" >I</text>
<rect x="1488" y="341" width="2" height="33" fill="url(#csep)"/>
<text x="1445.0" y="364" font-size="16.06" fill="#555" font-weight="normal" text-anchor="middle" >J</text>
<rect x="1576" y="341" width="2" height="33" fill="url(#csep)"/>
<text x="1533.0" y="364" font-size="16.06" fill="#555" font-weight="normal" text-anchor="middle" >K</text>
<rect x="1664" y="341" width="2" height="33" fill="url(#csep)"/>
<text x="1621.0" y="364" font-size="16.06" fill="#555" font-weight="normal" text-anchor="middle" >L</text>
<rect x="1752" y="341" width="2" height="33" fill="url(#csep)"/>
<text x="1709.0" y="364" font-size="16.06" fill="#555" font-weight="normal" text-anchor="middle" >M</text>
<rect x="1840" y="341" width="2" height="33" fill="url(#csep)"/>
<text x="1797.0" y="364" font-size="16.06" fill="#555" font-weight="normal" text-anchor="middle" >N</text>
<rect x="1928" y="341" width="2" height="33" fill="url(#csep)"/>
<text x="1885.0" y="364" font-size="16.06" fill="#555" font-weight="normal" text-anchor="middle" >O</text>
<rect x="2016" y="341" width="2" height="33" fill="url(#csep)"/>
<text x="1973.0" y="364" font-size="16.06" fill="#555" font-weight="normal" text-anchor="middle" >P</text>
<rect x="2104" y="341" width="2" height="33" fill="url(#csep)"/>
<text x="2061.0" y="364" font-size="16.06" fill="#555" font-weight="normal" text-anchor="middle" >Q</text>
<rect x="2192" y="341" width="2" height="33" fill="url(#csep)"/>
<text x="2149.0" y="364" font-size="16.06" fill="#555" font-weight="normal" text-anchor="middle" >R</text>
<rect x="2280" y="341" width="2" height="33" fill="url(#csep)"/>
<text x="2237.0" y="364" font-size="16.06" fill="#555" font-weight="normal" text-anchor="middle" >S</text>
<rect x="2368" y="341" width="2" height="33" fill="url(#csep)"/>
<text x="2325.0" y="364" font-size="16.06" fill="#555" font-weight="normal" text-anchor="middle" >T</text>
<rect x="2456" y="341" width="2" height="33" fill="url(#csep)"/>
<text x="2413.0" y="364" font-size="16.06" fill="#555" font-weight="normal" text-anchor="middle" >U</text>
<rect x="2544" y="341" width="2" height="33" fill="url(#csep)"/>
<text x="2501.0" y="364" font-size="16.06" fill="#555" font-weight="normal" text-anchor="middle" >V</text>
<rect x="2632" y="341" width="2" height="33" fill="url(#csep)"/>
<text x="2589.0" y="364" font-size="16.06" fill="#555" font-weight="normal" text-anchor="middle" >W</text>
<rect x="2720" y="341" width="2" height="33" fill="url(#csep)"/>
<text x="2677.0" y="364" font-size="16.06" fill="#555" font-weight="normal" text-anchor="middle" >X</text>
<rect x="2808" y="341" width="2" height="33" fill="url(#csep)"/>
<text x="2765.0" y="364" font-size="16.06" fill="#555" font-weight="normal" text-anchor="middle" >Y</text>
<rect x="2896" y="341" width="2" height="33" fill="url(#csep)"/>
<text x="2853.0" y="364" font-size="16.06" fill="#555" font-weight="normal" text-anchor="middle" >Z</text>
<rect x="2984" y="341" width="2" height="33" fill="url(#csep)"/>
<text x="2941.0" y="364" font-size="16.06" fill="#555" font-weight="normal" text-anchor="middle" >AA</text>
<rect x="524" y="372" width="138" height="4" fill="#387a4b"/>
<rect x="0" y="398" width="38" height="2" fill="url(#rsep)"/>
<text x="19.5" y="394" font-size="16.48" fill="#555" font-weight="normal" text-anchor="middle" >1</text>
<rect x="0" y="422" width="38" height="2" fill="url(#rsep)"/>
<text x="19.5" y="418" font-size="16.48" fill="#555" font-weight="normal" text-anchor="middle" >2</text>
<rect x="0" y="446" width="38" height="2" fill="url(#rsep)"/>
<text x="19.5" y="442" font-size="16.48" fill="#555" font-weight="normal" text-anchor="middle" >3</text>
<rect x="0" y="470" width="38" height="2" fill="url(#rsep)"/>
<text x="19.5" y="466" font-size="16.48" fill="#555" font-weight="normal" text-anchor="middle" >4</text>
<rect x="0" y="494" width="38" height="2" fill="url(#rsep)"/>
<text x="19.5" y="490" font-size="16.48" fill="#555" font-weight="normal" text-anchor="middle" >5</text>
<rect x="0" y="518" width="38" height="2" fill="url(#rsep)"/>
<text x="19.5" y="514" font-size="16.48" fill="#555" font-weight="normal" text-anchor="middle" >6</text>
<rect x="0" y="542" width="38" height="2" fill="url(#rsep)"/>
<text x="19.5" y="538" font-size="16.48" fill="#555" font-weight="normal" text-anchor="middle" >7</text>
<rect x="0" y="566" width="38" height="2" fill="url(#rsep)"/>
<text x="19.5" y="562" font-size="16.48" fill="#555" font-weight="normal" text-anchor="middle" >8</text>
<rect x="0" y="590" width="38" height="2" fill="url(#rsep)"/>
<text x="19.5" y="586" font-size="16.48" fill="#555" font-weight="normal" text-anchor="middle" >9</text>
<rect x="0" y="614" width="38" height="2" fill="url(#rsep)"/>
<text x="19.5" y="610" font-size="16.48" fill="#555" font-weight="normal" text-anchor="middle" >10</text>
<rect x="0" y="638" width="38" height="2" fill="url(#rsep)"/>
<text x="19.5" y="634" font-size="16.48" fill="#555" font-weight="normal" text-anchor="middle" >11</text>
<rect x="0" y="662" width="38" height="2" fill="url(#rsep)"/>
<text x="19.5" y="658" font-size="16.48" fill="#2f7048" font-weight="normal" text-anchor="middle" >12</text>
<rect x="0" y="686" width="38" height="2" fill="url(#rsep)"/>
<text x="19.5" y="682" font-size="16.48" fill="#555" font-weight="normal" text-anchor="middle" >13</text>
<rect x="0" y="710" width="38" height="2" fill="url(#rsep)"/>
<text x="19.5" y="706" font-size="16.48" fill="#555" font-weight="normal" text-anchor="middle" >14</text>
<rect x="0" y="734" width="38" height="2" fill="url(#rsep)"/>
<text x="19.5" y="730" font-size="16.48" fill="#555" font-weight="normal" text-anchor="middle" >15</text>
<rect x="0" y="758" width="38" height="2" fill="url(#rsep)"/>
<text x="19.5" y="754" font-size="16.48" fill="#555" font-weight="normal" text-anchor="middle" >16</text>
<rect x="0" y="782" width="38" height="2" fill="url(#rsep)"/>
<text x="19.5" y="778" font-size="16.48" fill="#555" font-weight="normal" text-anchor="middle" >17</text>
<rect x="0" y="806" width="38" height="2" fill="url(#rsep)"/>
<text x="19.5" y="802" font-size="16.48" fill="#555" font-weight="normal" text-anchor="middle" >18</text>
<rect x="0" y="830" width="38" height="2" fill="url(#rsep)"/>
<text x="19.5" y="826" font-size="16.48" fill="#555" font-weight="normal" text-anchor="middle" >19</text>
<rect x="0" y="854" width="38" height="2" fill="url(#rsep)"/>
<text x="19.5" y="850" font-size="16.48" fill="#555" font-weight="normal" text-anchor="middle" >20</text>
<rect x="0" y="878" width="38" height="2" fill="url(#rsep)"/>
<text x="19.5" y="874" font-size="16.48" fill="#555" font-weight="normal" text-anchor="middle" >21</text>
<rect x="0" y="902" width="38" height="2" fill="url(#rsep)"/>
<text x="19.5" y="898" font-size="16.48" fill="#555" font-weight="normal" text-anchor="middle" >22</text>
<rect x="0" y="926" width="38" height="2" fill="url(#rsep)"/>
<text x="19.5" y="922" font-size="16.48" fill="#555" font-weight="normal" text-anchor="middle" >23</text>
<rect x="0" y="950" width="38" height="2" fill="url(#rsep)"/>
<text x="19.5" y="946" font-size="16.48" fill="#555" font-weight="normal" text-anchor="middle" >24</text>
<rect x="0" y="974" width="38" height="2" fill="url(#rsep)"/>
<text x="19.5" y="970" font-size="16.48" fill="#555" font-weight="normal" text-anchor="middle" >25</text>
<rect x="0" y="998" width="38" height="2" fill="url(#rsep)"/>
<text x="19.5" y="994" font-size="16.48" fill="#555" font-weight="normal" text-anchor="middle" >26</text>
<rect x="0" y="1022" width="38" height="2" fill="url(#rsep)"/>
<text x="19.5" y="1018" font-size="16.48" fill="#555" font-weight="normal" text-anchor="middle" >27</text>
<rect x="0" y="1046" width="38" height="2" fill="url(#rsep)"/>
<text x="19.5" y="1042" font-size="16.48" fill="#555" font-weight="normal" text-anchor="middle" >28</text>
<rect x="0" y="1070" width="38" height="2" fill="url(#rsep)"/>
<text x="19.5" y="1066" font-size="16.48" fill="#555" font-weight="normal" text-anchor="middle" >29</text>
<rect x="0" y="1094" width="38" height="2" fill="url(#rsep)"/>
<text x="19.5" y="1090" font-size="16.48" fill="#555" font-weight="normal" text-anchor="middle" >30</text>
<rect x="0" y="1118" width="38" height="2" fill="url(#rsep)"/>
<text x="19.5" y="1114" font-size="16.48" fill="#555" font-weight="normal" text-anchor="middle" >31</text>
<rect x="0" y="1142" width="38" height="2" fill="url(#rsep)"/>
<text x="19.5" y="1138" font-size="16.48" fill="#555" font-weight="normal" text-anchor="middle" >32</text>
<rect x="0" y="1166" width="38" height="2" fill="url(#rsep)"/>
<text x="19.5" y="1162" font-size="16.48" fill="#555" font-weight="normal" text-anchor="middle" >33</text>
<rect x="0" y="1190" width="38" height="2" fill="url(#rsep)"/>
<text x="19.5" y="1186" font-size="16.48" fill="#555" font-weight="normal" text-anchor="middle" >34</text>
<rect x="0" y="1214" width="38" height="2" fill="url(#rsep)"/>
<text x="19.5" y="1210" font-size="16.48" fill="#555" font-weight="normal" text-anchor="middle" >35</text>
<rect x="0" y="1238" width="38" height="2" fill="url(#rsep)"/>
<text x="19.5" y="1234" font-size="16.48" fill="#555" font-weight="normal" text-anchor="middle" >36</text>
<rect x="0" y="1262" width="38" height="2" fill="url(#rsep)"/>
<text x="19.5" y="1258" font-size="16.48" fill="#555" font-weight="normal" text-anchor="middle" >37</text>
<rect x="0" y="1286" width="38" height="2" fill="url(#rsep)"/>
<text x="19.5" y="1282" font-size="16.48" fill="#555" font-weight="normal" text-anchor="middle" >38</text>
<rect x="0" y="1310" width="38" height="2" fill="url(#rsep)"/>
<text x="19.5" y="1306" font-size="16.48" fill="#555" font-weight="normal" text-anchor="middle" >39</text>
<rect x="0" y="1334" width="38" height="2" fill="url(#rsep)"/>
<text x="19.5" y="1330" font-size="16.48" fill="#555" font-weight="normal" text-anchor="middle" >40</text>
<rect x="0" y="1358" width="38" height="2" fill="url(#rsep)"/>
<text x="19.5" y="1354" font-size="16.48" fill="#555" font-weight="normal" text-anchor="middle" >41</text>
<rect x="0" y="1382" width="38" height="2" fill="url(#rsep)"/>
<text x="19.5" y="1378" font-size="16.48" fill="#555" font-weight="normal" text-anchor="middle" >42</text>
<rect x="0" y="1406" width="38" height="2" fill="url(#rsep)"/>
<text x="19.5" y="1402" font-size="16.48" fill="#555" font-weight="normal" text-anchor="middle" >43</text>
<rect x="0" y="1430" width="38" height="2" fill="url(#rsep)"/>
<text x="19.5" y="1426" font-size="16.48" fill="#555" font-weight="normal" text-anchor="middle" >44</text>
<rect x="0" y="1454" width="38" height="2" fill="url(#rsep)"/>
<text x="19.5" y="1450" font-size="16.48" fill="#555" font-weight="normal" text-anchor="middle" >45</text>
<rect x="0" y="1478" width="38" height="2" fill="url(#rsep)"/>
<text x="19.5" y="1474" font-size="16.48" fill="#555" font-weight="normal" text-anchor="middle" >46</text>
<rect x="0" y="1502" width="38" height="2" fill="url(#rsep)"/>
<text x="19.5" y="1498" font-size="16.48" fill="#555" font-weight="normal" text-anchor="middle" >47</text>
<rect x="0" y="1526" width="38" height="2" fill="url(#rsep)"/>
<text x="19.5" y="1522" font-size="16.48" fill="#555" font-weight="normal" text-anchor="middle" >48</text>
<rect x="0" y="1550" width="38" height="2" fill="url(#rsep)"/>
<text x="19.5" y="1546" font-size="16.48" fill="#555" font-weight="normal" text-anchor="middle" >49</text>
<rect x="0" y="1574" width="38" height="2" fill="url(#rsep)"/>
<text x="19.5" y="1570" font-size="16.48" fill="#555" font-weight="normal" text-anchor="middle" >50</text>
<rect x="0" y="1598" width="38" height="2" fill="url(#rsep)"/>
<text x="19.5" y="1594" font-size="16.48" fill="#555" font-weight="normal" text-anchor="middle" >51</text>
<rect x="0" y="1622" width="38" height="2" fill="url(#rsep)"/>
<text x="19.5" y="1618" font-size="16.48" fill="#555" font-weight="normal" text-anchor="middle" >52</text>
<rect x="0" y="1646" width="38" height="2" fill="url(#rsep)"/>
<text x="19.5" y="1642" font-size="16.48" fill="#555" font-weight="normal" text-anchor="middle" >53</text>
<rect x="0" y="1670" width="38" height="2" fill="url(#rsep)"/>
<text x="19.5" y="1666" font-size="16.48" fill="#555" font-weight="normal" text-anchor="middle" >54</text>
<rect x="0" y="1694" width="38" height="2" fill="url(#rsep)"/>
<text x="19.5" y="1690" font-size="16.48" fill="#555" font-weight="normal" text-anchor="middle" >55</text>
<rect x="0" y="1718" width="38" height="2" fill="url(#rsep)"/>
<text x="19.5" y="1714" font-size="16.48" fill="#555" font-weight="normal" text-anchor="middle" >56</text>
<rect x="0" y="1742" width="38" height="2" fill="url(#rsep)"/>
<text x="19.5" y="1738" font-size="16.48" fill="#555" font-weight="normal" text-anchor="middle" >57</text>
<rect x="36" y="638" width="4" height="26" fill="#387a4b"/>
<defs><linearGradient id="tbg" x1="0" y1="0" x2="0" y2="1"><stop offset="0" stop-color="#e6e6e6"/><stop offset="0.25" stop-color="#eeeeee"/><stop offset="1" stop-color="#efefef"/></linearGradient></defs><rect x="0" y="1738" width="2940" height="54" fill="url(#tbg)"/>
<rect x="0" y="1738" width="2940" height="1.5" fill="#cccccc"/>
<rect x="0" y="1790" width="2940" height="2" fill="#9e9e9e"/>
<path d="M30 1765.5 L44.5 1756 L44.5 1775 Z M90 1765.5 L76 1756 L76 1775 Z" fill="#b8b8b8"/>
<path d="M122 1738 L402.5 1738 L402.5 1778 Q402.5 1782 398.5 1782 L126 1782 Q122 1782 122 1778 Z" fill="#fff" stroke="#d0d0d0" stroke-width="1"/>
<rect x="122.5" y="1737" width="279.5" height="3" fill="#fff"/>
<text x="163" y="1772" font-size="23.04" fill="#3a7f50" font-weight="bold" text-anchor="start" textLength="197" lengthAdjust="spacingAndGlyphs" >DECEMBER 2016</text>
<text x="440.4" y="1772.3" font-size="25.14" fill="#5a5a5a" font-weight="normal" text-anchor="start" textLength="194.2" lengthAdjust="spacingAndGlyphs" stroke="#5a5a5a" stroke-width="0.4">NOVEMBER 2016</text>
<text x="709" y="1772.3" font-size="25.14" fill="#5a5a5a" font-weight="normal" text-anchor="start" textLength="145.3" lengthAdjust="spacingAndGlyphs" stroke="#5a5a5a" stroke-width="0.4">october 2016</text>
<rect x="672.5" y="1740" width="1.5" height="40" fill="#cfcfcf"/>
<rect x="890.3" y="1740" width="1.5" height="40" fill="#cfcfcf"/>
<rect x="965.8" y="1740" width="1.5" height="40" fill="#cfcfcf"/>
<path d="M930 1753 V1772.5 M920 1762.75 H940" stroke="#5a5a5a" stroke-width="3"/>
</svg>
</body></html>
